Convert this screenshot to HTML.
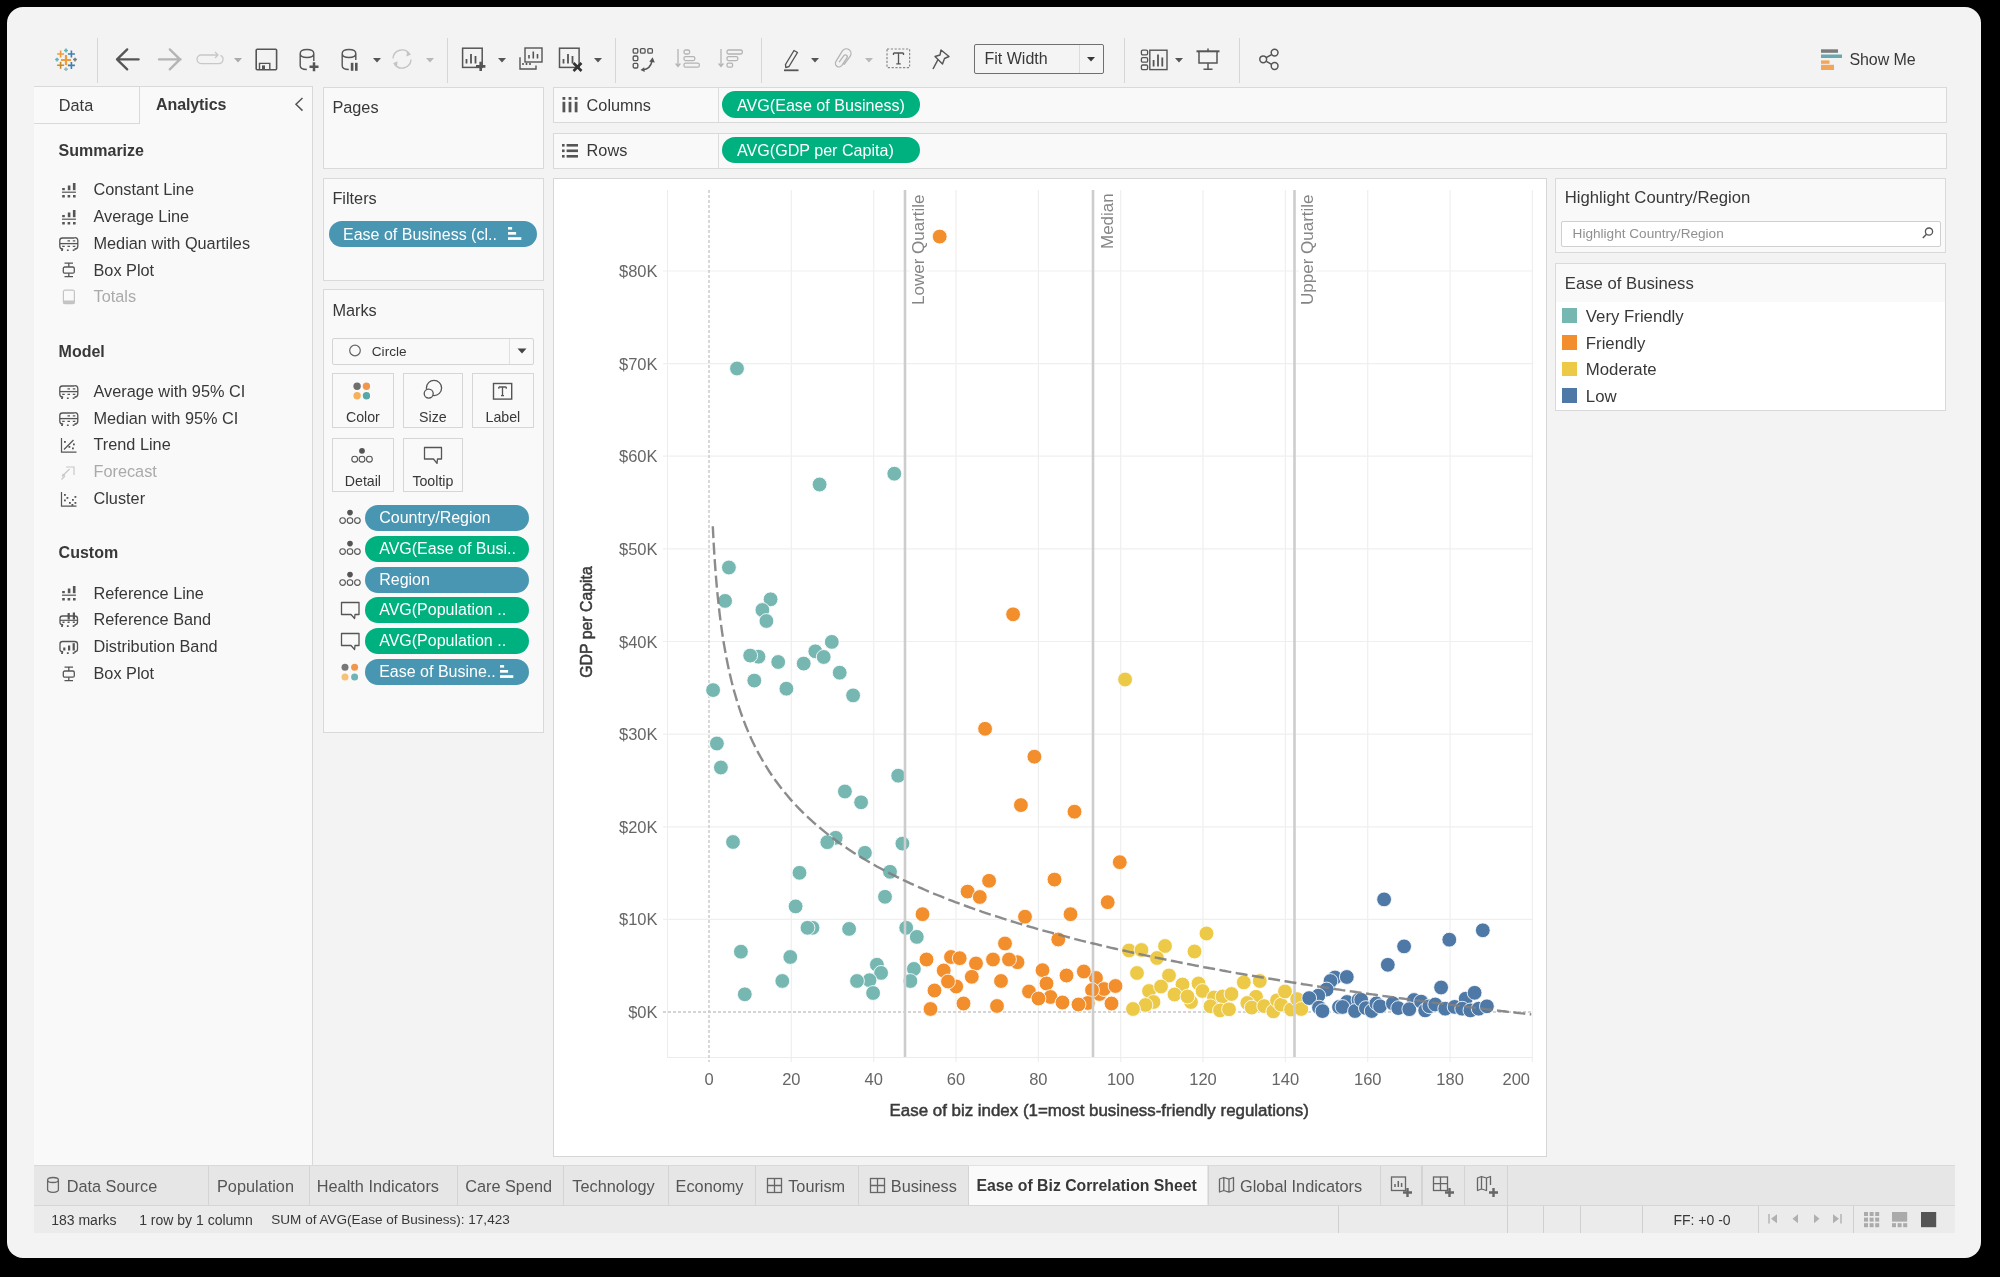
<!DOCTYPE html>
<html><head><meta charset="utf-8"><title>Tableau</title>
<style>
html,body{margin:0;padding:0;-webkit-font-smoothing:antialiased;}
body{width:2000px;height:1277px;background:#000;position:relative;overflow:hidden;font-family:"Liberation Sans", sans-serif;}
div,svg{font-family:"Liberation Sans", sans-serif;}
</style></head><body>
<div style="position:absolute;left:0;top:0;width:2000px;height:1277px;will-change:transform">
<div style="position:absolute;left:7px;top:7px;width:1974px;height:1251px;background:#f3f3f3;border-radius:16px"></div>
<svg style="position:absolute;left:51px;top:44.6px;" width="30" height="30" viewBox="0 0 30 30"><path d="M10 15H20M15 10V20" stroke="#f39a38" stroke-width="2.2"/><path d="M6.1 9H13.1M9.6 5.5V12.5" stroke="#f39a38" stroke-width="1.6"/><path d="M16.9 9H23.9M20.4 5.5V12.5" stroke="#3f7fb2" stroke-width="1.6"/><path d="M6.1 20.2H13.1M9.6 16.7V23.7" stroke="#c98a2a" stroke-width="1.6"/><path d="M16.9 20.4H23.9M20.4 16.9V23.9" stroke="#3f7fb2" stroke-width="1.6"/><path d="M13.1 5.5H16.9M15 3.6V7.4" stroke="#5fb0b8" stroke-width="1.5"/><path d="M13.1 24.2H16.9M15 22.3V26.099999999999998" stroke="#8fb7bd" stroke-width="1.5"/><path d="M4.1 14.6H7.9M6 12.7V16.5" stroke="#5fb0b8" stroke-width="1.5"/><path d="M22.1 14.6H25.9M24 12.7V16.5" stroke="#777" stroke-width="1.5"/></svg>
<div style="position:absolute;left:97px;top:38px;width:1px;height:45px;background:#d6d6d6"></div>
<svg style="position:absolute;left:113px;top:46px;" width="28" height="27" viewBox="0 0 28 27"><path d="M4 13.4H25.6M14.2 3.4L4 13.4L14.2 23.4" stroke="#555" stroke-width="2.3" fill="none" stroke-linecap="round" stroke-linejoin="round"/></svg>
<svg style="position:absolute;left:156px;top:46px;" width="28" height="27" viewBox="0 0 28 27"><path d="M3 13.4H24.6M13.8 3.4L24 13.4L13.8 23.4" stroke="#b4b4b4" stroke-width="2.3" fill="none" stroke-linecap="round" stroke-linejoin="round"/></svg>
<svg style="position:absolute;left:195px;top:50px;" width="31" height="16" viewBox="0 0 31 16"><path d="M22 5H6.3A4.3 4.3 0 0 0 6.3 13.6H23.5A4.3 4.3 0 0 0 25.5 5.4M20 2L23 5L20 8" stroke="#c8c8c8" stroke-width="1.3" fill="none"/></svg>
<svg style="position:absolute;left:233.5px;top:58.4px;" width="8" height="5" viewBox="0 0 8 5"><path d="M0 0 L8 0 L4 4.5 Z" fill="#aaa"/></svg>
<svg style="position:absolute;left:255px;top:48px;" width="23" height="23" viewBox="0 0 23 23"><rect x="1.2" y="1.2" width="20.4" height="20.6" rx="1" stroke="#555" stroke-width="1.6" fill="none"/><path d="M4.5 21.8V15.4H14.8V21.8" stroke="#555" stroke-width="1.4" fill="none"/><rect x="7" y="17.4" width="3" height="4" fill="#555"/></svg>
<svg style="position:absolute;left:297px;top:47px;" width="24" height="26" viewBox="0 0 24 26"><path d="M3.2 6.5V18.8C3.2 21 6 22.5 9.8 22.5M3.2 6.5C3.2 4 6 2.5 10 2.5S16.8 4 16.8 6.5 14 10.5 10 10.5 3.2 9 3.2 6.5ZM16.8 6.5V14" stroke="#555" stroke-width="1.4" fill="none"/><path d="M12.5 19.8H21.5M17 15.3V24.3" stroke="#555" stroke-width="2.5"/></svg>
<svg style="position:absolute;left:339px;top:47px;" width="22" height="26" viewBox="0 0 22 26"><path d="M3.2 6.5V18.8C3.2 21 6 22.5 9.8 22.5M3.2 6.5C3.2 4 6 2.5 10 2.5S16.8 4 16.8 6.5 14 10.5 10 10.5 3.2 9 3.2 6.5ZM16.8 6.5V13" stroke="#555" stroke-width="1.4" fill="none"/><rect x="11.8" y="15.8" width="2.6" height="8" fill="#555"/><rect x="16" y="15.8" width="2.6" height="8" fill="#555"/></svg>
<svg style="position:absolute;left:372.5px;top:58px;" width="8" height="5" viewBox="0 0 8 5"><path d="M0 0 L8 0 L4 4.5 Z" fill="#555"/></svg>
<svg style="position:absolute;left:390px;top:47px;" width="24" height="24" viewBox="0 0 24 24"><path d="M3 11.5A9 9 0 0 1 19.5 7M21 12.5A9 9 0 0 1 4.5 17" stroke="#c4c4c4" stroke-width="1.4" fill="none"/><path d="M17 4L21 7.5L16.5 9.5Z M7 19.8L3 16.3L7.5 14.3Z" fill="#c4c4c4"/></svg>
<svg style="position:absolute;left:426px;top:58px;" width="8" height="5" viewBox="0 0 8 5"><path d="M0 0 L8 0 L4 4.5 Z" fill="#b8b8b8"/></svg>
<div style="position:absolute;left:446.5px;top:38px;width:1.0px;height:45px;background:#d6d6d6"></div>
<svg style="position:absolute;left:460px;top:46px;" width="28" height="26" viewBox="0 0 28 26"><rect x="2.6" y="2.2" width="19.6" height="19.2" stroke="#555" stroke-width="1.5" fill="none"/><path d="M6.5 17.5V13M11 17.5V8M15.5 17.5V10" stroke="#555" stroke-width="1.8"/><path d="M16 20.4H25.4M20.7 15.7V25.1" stroke="#555" stroke-width="2.6"/></svg>
<svg style="position:absolute;left:498px;top:58px;" width="8" height="5" viewBox="0 0 8 5"><path d="M0 0 L8 0 L4 4.5 Z" fill="#555"/></svg>
<svg style="position:absolute;left:517px;top:46px;" width="27" height="26" viewBox="0 0 27 26"><path d="M3 11.2V23H19V19.6" stroke="#555" stroke-width="1.4" fill="none"/><rect x="8" y="2" width="17" height="14" stroke="#555" stroke-width="1.4" fill="none"/><path d="M12 12.5V9M16.3 12.5V5.5M20.5 12.5V8M6 19V17M9.5 19V17M13 19V17" stroke="#555" stroke-width="1.6"/></svg>
<svg style="position:absolute;left:557px;top:46px;" width="28" height="27" viewBox="0 0 28 27"><rect x="2.5" y="2.2" width="19.6" height="19.2" stroke="#555" stroke-width="1.5" fill="none"/><path d="M6.5 17.5V13M11 17.5V8M15.5 17.5V10" stroke="#555" stroke-width="1.8"/><path d="M16.5 17L24.5 25M24.5 17L16.5 25" stroke="#333" stroke-width="2.6"/></svg>
<svg style="position:absolute;left:593.5px;top:58px;" width="8" height="5" viewBox="0 0 8 5"><path d="M0 0 L8 0 L4 4.5 Z" fill="#555"/></svg>
<div style="position:absolute;left:615px;top:38px;width:1px;height:45px;background:#d6d6d6"></div>
<svg style="position:absolute;left:632px;top:47px;" width="24" height="25" viewBox="0 0 24 25"><rect x="1.2" y="1.6" width="4.6" height="4.6" rx="1.2" stroke="#555" stroke-width="1.3" fill="none"/><rect x="8.5" y="1.6" width="4.6" height="4.6" rx="1.2" stroke="#555" stroke-width="1.3" fill="none"/><rect x="15.8" y="1.6" width="4.6" height="4.6" rx="1.2" stroke="#555" stroke-width="1.3" fill="none"/><rect x="1.2" y="9" width="4.6" height="4.6" rx="1.2" stroke="#555" stroke-width="1.3" fill="none"/><rect x="1.2" y="16.4" width="4.6" height="4.6" rx="1.2" stroke="#555" stroke-width="1.3" fill="none"/><path d="M11 22.8C15.5 22.5 19 19 20.2 13.5" stroke="#555" stroke-width="1.5" fill="none"/><path d="M17.3 14.8L20.6 10.3L22.8 15.5ZM12.2 20.2L8.5 23L12.7 25Z" fill="#555"/></svg>
<svg style="position:absolute;left:674px;top:47px;" width="27" height="23" viewBox="0 0 27 23"><path d="M4 2V19M1.6 16.5L4 19.5L6.4 16.5" stroke="#b4b4b4" stroke-width="1.3" fill="none"/><rect x="10" y="3" width="5.6" height="4" rx="1.5" stroke="#b4b4b4" stroke-width="1.3" fill="none"/><rect x="10" y="9.6" width="10.8" height="4" rx="1.5" stroke="#b4b4b4" stroke-width="1.3" fill="none"/><rect x="10" y="16.2" width="15.3" height="4" rx="1.5" stroke="#b4b4b4" stroke-width="1.3" fill="none"/></svg>
<svg style="position:absolute;left:717px;top:47px;" width="27" height="23" viewBox="0 0 27 23"><path d="M4 2V19M1.6 16.5L4 19.5L6.4 16.5" stroke="#b4b4b4" stroke-width="1.3" fill="none"/><rect x="10" y="3" width="15.3" height="4" rx="1.5" stroke="#b4b4b4" stroke-width="1.3" fill="none"/><rect x="10" y="9.6" width="10.8" height="4" rx="1.5" stroke="#b4b4b4" stroke-width="1.3" fill="none"/><rect x="10" y="16.2" width="5.6" height="4" rx="1.5" stroke="#b4b4b4" stroke-width="1.3" fill="none"/></svg>
<div style="position:absolute;left:761px;top:38px;width:1px;height:45px;background:#d6d6d6"></div>
<svg style="position:absolute;left:781px;top:47px;" width="20" height="26" viewBox="0 0 20 26"><path d="M13 3.5L16.5 5.5L8 19.5L4.8 20.6L4.5 17.5Z" stroke="#555" stroke-width="1.4" fill="none" stroke-linejoin="round"/><path d="M3 23.3H17.5" stroke="#555" stroke-width="1.8"/></svg>
<svg style="position:absolute;left:811px;top:58px;" width="8" height="5" viewBox="0 0 8 5"><path d="M0 0 L8 0 L4 4.5 Z" fill="#555"/></svg>
<svg style="position:absolute;left:833px;top:46px;" width="21" height="25" viewBox="0 0 21 25"><path d="M11.2 18.3L17.06 10.37A4.7 4.7 0 0 0 9.54 4.73L3.12 15.14A3.6 3.6 0 0 0 8.88 19.46L13.87 11.99A1.9 1.9 0 0 0 10.83 9.71L6.3 15.8" stroke="#b4b4b4" stroke-width="1.3" fill="none" stroke-linecap="round"/></svg>
<svg style="position:absolute;left:864.5px;top:58px;" width="8" height="5" viewBox="0 0 8 5"><path d="M0 0 L8 0 L4 4.5 Z" fill="#b8b8b8"/></svg>
<svg style="position:absolute;left:885px;top:47px;" width="27" height="23" viewBox="0 0 27 23"><rect x="2" y="2" width="22.6" height="18.6" stroke="#888" stroke-width="1.2" fill="none" stroke-dasharray="2.2 1.6"/><path d="M8.5 6H18.5M13.5 6V16.8M11.3 16.8H15.7M8.5 6V8M18.5 6V8" stroke="#555" stroke-width="1.3" fill="none"/></svg>
<svg style="position:absolute;left:930px;top:47px;" width="22" height="25" viewBox="0 0 22 25"><path d="M11 3L19 9.5L14.5 11.5L12.5 17L10.5 15L5 9.5L10 8Z" stroke="#555" stroke-width="1.4" fill="none" stroke-linejoin="round"/><path d="M8 12.5L3 22" stroke="#555" stroke-width="1.5"/></svg>
<div style="position:absolute;left:973.5px;top:44px;width:130.0px;height:29.5px;border:1.4px solid #6f6f6f;border-radius:2px;box-sizing:border-box;background:#f4f4f4"></div>
<div style="position:absolute;left:1079px;top:45px;width:1px;height:27.5px;background:#dcdcdc"></div>
<div style="position:absolute;left:984.50px;top:51.06px;font-size:16px;line-height:16px;font-weight:400;color:#383838;white-space:nowrap;">Fit Width</div>
<svg style="position:absolute;left:1086.7px;top:56.8px;" width="8" height="5" viewBox="0 0 8 5"><path d="M0 0 L8 0 L4 4.5 Z" fill="#383838"/></svg>
<div style="position:absolute;left:1124px;top:38px;width:1px;height:45px;background:#d6d6d6"></div>
<svg style="position:absolute;left:1140px;top:49px;" width="29" height="22" viewBox="0 0 29 22"><rect x="1.4" y="1.2" width="6.2" height="4.6" rx="1.3" stroke="#555" stroke-width="1.3" fill="none"/><rect x="1.4" y="8.6" width="6.2" height="4.6" rx="1.3" stroke="#555" stroke-width="1.3" fill="none"/><rect x="1.4" y="16" width="6.2" height="4.6" rx="1.3" stroke="#555" stroke-width="1.3" fill="none"/><rect x="9.8" y="1.2" width="17.2" height="19.4" stroke="#555" stroke-width="1.4" fill="none"/><path d="M13.6 17.5V11M18 17.5V5.5M22.3 17.5V8.5" stroke="#555" stroke-width="1.8"/></svg>
<svg style="position:absolute;left:1174.5px;top:58px;" width="8" height="5" viewBox="0 0 8 5"><path d="M0 0 L8 0 L4 4.5 Z" fill="#555"/></svg>
<svg style="position:absolute;left:1195px;top:48px;" width="26" height="23" viewBox="0 0 26 23"><path d="M1.5 3.3H24.5" stroke="#555" stroke-width="2"/><path d="M4 3.5V15H22V3.5M13 15V21M8.5 21.2H17.5M13 0.5V3" stroke="#555" stroke-width="1.5" fill="none"/></svg>
<div style="position:absolute;left:1239px;top:38px;width:1px;height:45px;background:#d6d6d6"></div>
<svg style="position:absolute;left:1257px;top:47px;" width="24" height="25" viewBox="0 0 24 25"><path d="M6 12.3L17.5 6M6 12.3L17.5 19" stroke="#555" stroke-width="1.5"/><circle cx="17.6" cy="5.6" r="3.4" stroke="#555" stroke-width="1.5" fill="#f4f4f4"/><circle cx="6.2" cy="12.3" r="3.4" stroke="#555" stroke-width="1.5" fill="#f4f4f4"/><circle cx="17.6" cy="19" r="3.4" stroke="#555" stroke-width="1.5" fill="#f4f4f4"/></svg>
<svg style="position:absolute;left:1820px;top:48px;" width="25" height="23" viewBox="0 0 25 23"><rect x="1" y="1.3" width="17" height="3.5" fill="#7c7c7c"/><rect x="1" y="6.5" width="21" height="3.5" fill="#66aab0"/><rect x="1" y="12.4" width="8.5" height="3.4" fill="#f2a65a"/><rect x="1" y="16.8" width="13" height="5.2" fill="#f2a65a"/></svg>
<div style="position:absolute;left:1849.50px;top:52.46px;font-size:16px;line-height:16px;font-weight:400;color:#383838;white-space:nowrap;letter-spacing:-0.1px">Show Me</div>
<div style="position:absolute;left:34px;top:86px;width:279px;height:1079px;background:#f9f9f9;border-top:1px solid #d9d9d9;border-right:1px solid #d9d9d9;box-sizing:border-box"></div>
<div style="position:absolute;left:34px;top:86px;width:106px;height:38px;border-right:1px solid #d9d9d9;border-bottom:1px solid #d9d9d9;box-sizing:border-box;background:#f9f9f9;border-top:1px solid #d9d9d9"></div>
<div style="position:absolute;left:58.80px;top:97.00px;font-size:16.3px;line-height:16.3px;font-weight:400;color:#383838;white-space:nowrap;">Data</div>
<div style="position:absolute;left:156.00px;top:96.66px;font-size:16px;line-height:16px;font-weight:700;color:#383838;white-space:nowrap;letter-spacing:-0.1px">Analytics</div>
<svg style="position:absolute;left:292px;top:96px;" width="14" height="16" viewBox="0 0 14 16"><path d="M10.5 2L4 8.3L10.5 14.6" stroke="#555" stroke-width="1.5" fill="none"/></svg>
<div style="position:absolute;left:58.60px;top:142.66px;font-size:16px;line-height:16px;font-weight:700;color:#383838;white-space:nowrap;">Summarize</div>
<div style="position:absolute;left:58.60px;top:343.76px;font-size:16px;line-height:16px;font-weight:700;color:#383838;white-space:nowrap;">Model</div>
<div style="position:absolute;left:58.60px;top:544.66px;font-size:16px;line-height:16px;font-weight:700;color:#383838;white-space:nowrap;">Custom</div>
<svg style="position:absolute;left:59px;top:182.2px;" width="20" height="16" viewBox="0 0 20 16"><rect x="3.2" y="6" width="2.6" height="2.2" fill="#555"/><rect x="8.8" y="3.5" width="2.6" height="4.7" fill="#555"/><rect x="13.9" y="1" width="2.6" height="7.2" fill="#555"/><path d="M3 10.2H17" stroke="#555" stroke-width="1.2"/><rect x="3.2" y="13" width="2.6" height="2.5" fill="#555"/><rect x="8.6" y="13" width="2.6" height="2.5" fill="#555"/><rect x="14" y="13" width="2.6" height="2.5" fill="#555"/></svg>
<div style="position:absolute;left:93.50px;top:181.40px;font-size:16.3px;line-height:16.3px;font-weight:400;color:#383838;white-space:nowrap;">Constant Line</div>
<svg style="position:absolute;left:59px;top:208.9px;" width="20" height="16" viewBox="0 0 20 16"><rect x="3.2" y="6" width="2.6" height="2.2" fill="#555"/><rect x="8.8" y="3.5" width="2.6" height="4.7" fill="#555"/><rect x="13.9" y="1" width="2.6" height="7.2" fill="#555"/><path d="M3 10.2H17" stroke="#555" stroke-width="1.2"/><rect x="3.2" y="13" width="2.6" height="2.5" fill="#555"/><rect x="8.6" y="13" width="2.6" height="2.5" fill="#555"/><rect x="14" y="13" width="2.6" height="2.5" fill="#555"/></svg>
<div style="position:absolute;left:93.50px;top:208.10px;font-size:16.3px;line-height:16.3px;font-weight:400;color:#383838;white-space:nowrap;">Average Line</div>
<svg style="position:absolute;left:59px;top:235.6px;" width="20" height="16" viewBox="0 0 20 16"><path d="M3.5 14V13C1.2 13 0.8 12 0.8 10V4.5C0.8 2.5 1.5 2 3.5 2H15C17 1 18.8 2.5 18.8 4.5V10C18.8 12 18 13 16 13V14" stroke="#555" stroke-width="1.3" fill="none"/><path d="M1 7.6H19" stroke="#555" stroke-width="1.3"/><path d="M8.5 4.8H11M13.8 4.8H16.3M3.2 10.4H5.7M8.5 10.4H11M13.8 10.4H16.3" stroke="#555" stroke-width="1.3"/><path d="M3 13.5V15M8.8 13.5V15M14.6 13.5V15" stroke="#555" stroke-width="1.8"/></svg>
<div style="position:absolute;left:93.50px;top:234.80px;font-size:16.3px;line-height:16.3px;font-weight:400;color:#383838;white-space:nowrap;">Median with Quartiles</div>
<svg style="position:absolute;left:59px;top:262.4px;" width="20" height="16" viewBox="0 0 20 16"><path d="M5.5 1.2H14M9.8 1.2V5M9.8 11.2V14.6M5.5 14.6H14" stroke="#555" stroke-width="1.3"/><rect x="4.3" y="5" width="11" height="6.2" rx="1.5" stroke="#555" stroke-width="1.3" fill="none"/></svg>
<div style="position:absolute;left:93.50px;top:261.60px;font-size:16.3px;line-height:16.3px;font-weight:400;color:#383838;white-space:nowrap;">Box Plot</div>
<svg style="position:absolute;left:59px;top:289.0px;" width="20" height="16" viewBox="0 0 20 16"><rect x="4.4" y="1.2" width="11" height="13.5" rx="1.6" stroke="#c4c4c4" stroke-width="1.2" fill="none"/><rect x="4.4" y="11.5" width="11" height="3.2" fill="#c4c4c4"/></svg>
<div style="position:absolute;left:93.50px;top:288.20px;font-size:16.3px;line-height:16.3px;font-weight:400;color:#aaa;white-space:nowrap;">Totals</div>
<svg style="position:absolute;left:59px;top:383.8px;" width="20" height="16" viewBox="0 0 20 16"><path d="M3.5 14V13C1.2 13 0.8 12 0.8 10V4.5C0.8 2.5 1.5 2 3.5 2H15C17 1 18.8 2.5 18.8 4.5V10C18.8 12 18 13 16 13V14" stroke="#555" stroke-width="1.3" fill="none"/><path d="M1 7.6H19" stroke="#555" stroke-width="1.3"/><path d="M8.5 4.8H11M13.8 4.8H16.3M3.2 10.4H5.7M8.5 10.4H11M13.8 10.4H16.3" stroke="#555" stroke-width="1.3"/><path d="M3 13.5V15M8.8 13.5V15M14.6 13.5V15" stroke="#555" stroke-width="1.8"/></svg>
<div style="position:absolute;left:93.50px;top:383.00px;font-size:16.3px;line-height:16.3px;font-weight:400;color:#383838;white-space:nowrap;">Average with 95% CI</div>
<svg style="position:absolute;left:59px;top:410.5px;" width="20" height="16" viewBox="0 0 20 16"><path d="M3.5 14V13C1.2 13 0.8 12 0.8 10V4.5C0.8 2.5 1.5 2 3.5 2H15C17 1 18.8 2.5 18.8 4.5V10C18.8 12 18 13 16 13V14" stroke="#555" stroke-width="1.3" fill="none"/><path d="M1 7.6H19" stroke="#555" stroke-width="1.3"/><path d="M8.5 4.8H11M13.8 4.8H16.3M3.2 10.4H5.7M8.5 10.4H11M13.8 10.4H16.3" stroke="#555" stroke-width="1.3"/><path d="M3 13.5V15M8.8 13.5V15M14.6 13.5V15" stroke="#555" stroke-width="1.8"/></svg>
<div style="position:absolute;left:93.50px;top:409.70px;font-size:16.3px;line-height:16.3px;font-weight:400;color:#383838;white-space:nowrap;">Median with 95% CI</div>
<svg style="position:absolute;left:59px;top:437.2px;" width="20" height="16" viewBox="0 0 20 16"><path d="M2.5 1V15.2H17.5" stroke="#555" stroke-width="1.2" fill="none"/><path d="M5 12.5L14.5 3" stroke="#555" stroke-width="1.2"/><rect x="5" y="4" width="1.8" height="1.8" fill="#555"/><rect x="9.5" y="9" width="1.8" height="1.8" fill="#555"/><rect x="13" y="10.5" width="1.8" height="1.8" fill="#555"/><rect x="14" y="6.5" width="1.8" height="1.8" fill="#555"/></svg>
<div style="position:absolute;left:93.50px;top:436.40px;font-size:16.3px;line-height:16.3px;font-weight:400;color:#383838;white-space:nowrap;">Trend Line</div>
<svg style="position:absolute;left:59px;top:463.9px;" width="20" height="16" viewBox="0 0 20 16"><path d="M3 12.5L10.5 5M7 3H15V11M2.5 15.5L5.5 12.5" stroke="#c8c8c8" stroke-width="1.2" fill="none"/><path d="M3.5 10L6 12.5" stroke="#c8c8c8" stroke-width="1.2"/></svg>
<div style="position:absolute;left:93.50px;top:463.10px;font-size:16.3px;line-height:16.3px;font-weight:400;color:#aaa;white-space:nowrap;">Forecast</div>
<svg style="position:absolute;left:59px;top:490.6px;" width="20" height="16" viewBox="0 0 20 16"><path d="M2.5 1V15.2H17.5" stroke="#555" stroke-width="1.2" fill="none"/><rect x="5" y="3" width="1.8" height="1.8" fill="#555"/><rect x="7.5" y="6" width="1.8" height="1.8" fill="#555"/><rect x="5" y="8.5" width="1.8" height="1.8" fill="#555"/><rect x="10" y="11" width="1.8" height="1.8" fill="#555"/><rect x="13" y="8" width="1.8" height="1.8" fill="#555"/><rect x="15.5" y="5" width="1.8" height="1.8" fill="#555"/><rect x="15.5" y="11" width="1.8" height="1.8" fill="#555"/><rect x="12.5" y="13" width="1.8" height="1.8" fill="#555"/></svg>
<div style="position:absolute;left:93.50px;top:489.80px;font-size:16.3px;line-height:16.3px;font-weight:400;color:#383838;white-space:nowrap;">Cluster</div>
<svg style="position:absolute;left:59px;top:585.3px;" width="20" height="16" viewBox="0 0 20 16"><rect x="3.2" y="6" width="2.6" height="2.2" fill="#555"/><rect x="8.8" y="3.5" width="2.6" height="4.7" fill="#555"/><rect x="13.9" y="1" width="2.6" height="7.2" fill="#555"/><path d="M3 10.2H17" stroke="#555" stroke-width="1.2"/><rect x="3.2" y="13" width="2.6" height="2.5" fill="#555"/><rect x="8.6" y="13" width="2.6" height="2.5" fill="#555"/><rect x="14" y="13" width="2.6" height="2.5" fill="#555"/></svg>
<div style="position:absolute;left:93.50px;top:584.50px;font-size:16.3px;line-height:16.3px;font-weight:400;color:#383838;white-space:nowrap;">Reference Line</div>
<svg style="position:absolute;left:59px;top:612.0px;" width="20" height="16" viewBox="0 0 20 16"><path d="M3.5 14V12.6C1.5 12.6 1 12 1 10V6.5C1 4.8 1.6 4 3.5 4H15.5C17.5 4 18.5 4.8 18.5 6.5V10C18.5 12 18 12.6 16 12.6V14" stroke="#555" stroke-width="1.3" fill="none"/><rect x="8.6" y="1" width="2.2" height="6.5" fill="#555"/><rect x="13.8" y="0.5" width="2.2" height="7" fill="#555"/><path d="M1 8.3H19" stroke="#555" stroke-width="1.2"/><path d="M3.5 10.3H5.5M8.6 10.3H10.6M13.8 10.3H15.8" stroke="#555" stroke-width="1.6"/><path d="M3 13.3V15M8.8 13.3V15M14.6 13.3V15" stroke="#555" stroke-width="1.8"/></svg>
<div style="position:absolute;left:93.50px;top:611.20px;font-size:16.3px;line-height:16.3px;font-weight:400;color:#383838;white-space:nowrap;">Reference Band</div>
<svg style="position:absolute;left:59px;top:638.8px;" width="20" height="16" viewBox="0 0 20 16"><path d="M3.5 14V12.6C1.5 12.6 1 12 1 10V5C1 3 1.6 2.5 3.5 2.5H15.5C17.5 2.5 18.5 3 18.5 5V10C18.5 12 18 12.6 16 12.6V14" stroke="#555" stroke-width="1.3" fill="none"/><rect x="4.2" y="8.5" width="2.2" height="3" fill="#555"/><rect x="9" y="6.5" width="2.2" height="5" fill="#555"/><rect x="13.6" y="4.2" width="2.2" height="7.3" fill="#555"/><path d="M3 13.3V15M8.8 13.3V15M14.6 13.3V15" stroke="#555" stroke-width="1.8"/></svg>
<div style="position:absolute;left:93.50px;top:638.00px;font-size:16.3px;line-height:16.3px;font-weight:400;color:#383838;white-space:nowrap;">Distribution Band</div>
<svg style="position:absolute;left:59px;top:665.6px;" width="20" height="16" viewBox="0 0 20 16"><path d="M5.5 1.2H14M9.8 1.2V5M9.8 11.2V14.6M5.5 14.6H14" stroke="#555" stroke-width="1.3"/><rect x="4.3" y="5" width="11" height="6.2" rx="1.5" stroke="#555" stroke-width="1.3" fill="none"/></svg>
<div style="position:absolute;left:93.50px;top:664.80px;font-size:16.3px;line-height:16.3px;font-weight:400;color:#383838;white-space:nowrap;">Box Plot</div>
<div style="position:absolute;left:322.5px;top:86.5px;width:221.0px;height:82.0px;background:#f9f9f9;border:1px solid #d9d9d9;box-sizing:border-box"></div>
<div style="position:absolute;left:332.40px;top:98.70px;font-size:16.3px;line-height:16.3px;font-weight:400;color:#383838;white-space:nowrap;">Pages</div>
<div style="position:absolute;left:322.5px;top:177.5px;width:221.0px;height:103.5px;background:#f9f9f9;border:1px solid #d9d9d9;box-sizing:border-box"></div>
<div style="position:absolute;left:332.40px;top:189.60px;font-size:16.3px;line-height:16.3px;font-weight:400;color:#383838;white-space:nowrap;">Filters</div>
<div style="position:absolute;left:328.8px;top:220.8px;width:208.2px;height:26.399999999999977px;background:#4996b2;border-radius:13.199999999999989px"></div>
<div style="position:absolute;left:343.00px;top:226.66px;font-size:16px;line-height:16px;font-weight:400;color:#fff;white-space:nowrap;">Ease of Business (cl..</div>
<svg style="position:absolute;left:507.7px;top:226.8px;" width="16" height="14" viewBox="0 0 16 14"><rect x="0" y="0" width="4.1" height="2.6" fill="#fff"/><rect x="0" y="5" width="8.1" height="2.7" fill="#fff"/><rect x="0" y="10.2" width="13.3" height="2.7" fill="#fff"/></svg>
<div style="position:absolute;left:322.5px;top:289px;width:221.0px;height:443.5px;background:#f9f9f9;border:1px solid #d9d9d9;box-sizing:border-box"></div>
<div style="position:absolute;left:332.40px;top:302.20px;font-size:16.3px;line-height:16.3px;font-weight:400;color:#383838;white-space:nowrap;">Marks</div>
<div style="position:absolute;left:332px;top:337.6px;width:201.70000000000005px;height:27.0px;border:1px solid #d4d4d4;border-radius:2px;box-sizing:border-box;background:#f9f9f9"></div>
<div style="position:absolute;left:509px;top:338.6px;width:1px;height:25.0px;background:#e0e0e0"></div>
<svg style="position:absolute;left:348px;top:344px;" width="14" height="14" viewBox="0 0 14 14"><circle cx="7" cy="6.5" r="5.3" stroke="#666" stroke-width="1.2" fill="none"/></svg>
<div style="position:absolute;left:371.80px;top:344.69px;font-size:13.6px;line-height:13.6px;font-weight:400;color:#383838;white-space:nowrap;">Circle</div>
<svg style="position:absolute;left:516.5px;top:348px;" width="10" height="6" viewBox="0 0 10 6"><path d="M0.5 0.5H9.5L5 5.5Z" fill="#444"/></svg>
<div style="position:absolute;left:332px;top:373.4px;width:61.80000000000001px;height:55.0px;background:#f9f9f9;border:1px solid #d6d6d6;box-sizing:border-box"></div>
<div style="position:absolute;left:402.5px;top:373.4px;width:60.80000000000001px;height:55.0px;background:#f9f9f9;border:1px solid #d6d6d6;box-sizing:border-box"></div>
<div style="position:absolute;left:472.2px;top:373.4px;width:61.50000000000006px;height:55.0px;background:#f9f9f9;border:1px solid #d6d6d6;box-sizing:border-box"></div>
<div style="position:absolute;left:332px;top:437.5px;width:61.80000000000001px;height:54.89999999999998px;background:#f9f9f9;border:1px solid #d6d6d6;box-sizing:border-box"></div>
<div style="position:absolute;left:402.5px;top:437.5px;width:60.80000000000001px;height:54.89999999999998px;background:#f9f9f9;border:1px solid #d6d6d6;box-sizing:border-box"></div>
<div style="position:absolute;left:62.90px;width:600px;text-align:center;top:409.98px;font-size:14.2px;line-height:14.2px;font-weight:400;color:#383838;white-space:nowrap;">Color</div>
<div style="position:absolute;left:132.90px;width:600px;text-align:center;top:409.98px;font-size:14.2px;line-height:14.2px;font-weight:400;color:#383838;white-space:nowrap;">Size</div>
<div style="position:absolute;left:202.90px;width:600px;text-align:center;top:409.98px;font-size:14.2px;line-height:14.2px;font-weight:400;color:#383838;white-space:nowrap;">Label</div>
<div style="position:absolute;left:62.90px;width:600px;text-align:center;top:473.98px;font-size:14.2px;line-height:14.2px;font-weight:400;color:#383838;white-space:nowrap;">Detail</div>
<div style="position:absolute;left:132.90px;width:600px;text-align:center;top:473.98px;font-size:14.2px;line-height:14.2px;font-weight:400;color:#383838;white-space:nowrap;">Tooltip</div>
<svg style="position:absolute;left:350px;top:379px;" width="20" height="22" viewBox="0 0 20 22"><circle cx="7.1" cy="7.3" r="3.7" fill="#6f6f6f"/><circle cx="16.5" cy="7.3" r="3.7" fill="#f3954a"/><circle cx="7.1" cy="16.7" r="3.7" fill="#f6b15b"/><circle cx="16.5" cy="16.7" r="3.7" fill="#5aa6a6"/></svg>
<svg style="position:absolute;left:420px;top:378px;" width="24" height="24" viewBox="0 0 24 24"><circle cx="14" cy="10" r="7.6" stroke="#555" stroke-width="1.3" fill="none"/><circle cx="8.7" cy="15.6" r="4.5" stroke="#555" stroke-width="1.3" fill="#f9f9f9"/></svg>
<svg style="position:absolute;left:492px;top:382px;" width="22" height="19" viewBox="0 0 22 19"><rect x="1.5" y="1.5" width="18.2" height="15.6" stroke="#555" stroke-width="1.4" fill="none"/><path d="M6.8 5H14.3M10.5 5V13.6M9 13.6H12M6.8 5V6.8M14.3 5V6.8" stroke="#555" stroke-width="1.3" fill="none"/></svg>
<svg style="position:absolute;left:350px;top:446px;" width="24" height="18" viewBox="0 0 24 18"><circle cx="12" cy="4.8" r="2.9" fill="#555"/><circle cx="4.7" cy="13.2" r="2.9" stroke="#555" stroke-width="1.1" fill="none"/><circle cx="12" cy="13.2" r="2.9" stroke="#555" stroke-width="1.1" fill="none"/><circle cx="19.4" cy="13.2" r="2.9" stroke="#555" stroke-width="1.1" fill="none"/></svg>
<svg style="position:absolute;left:422px;top:445px;" width="22" height="21" viewBox="0 0 22 21"><path d="M2.5 2.5H19.5V14H15.5L15 18.3L11.5 14H2.5Z" stroke="#555" stroke-width="1.3" fill="none" stroke-linejoin="round"/></svg>
<div style="position:absolute;left:365.4px;top:505.3px;width:163.39999999999998px;height:26.19999999999999px;background:#4996b2;border-radius:13.099999999999994px"></div>
<div style="position:absolute;left:379.20px;top:510.36px;font-size:16px;line-height:16px;font-weight:400;color:#fff;white-space:nowrap;">Country/Region</div>
<svg style="position:absolute;left:338px;top:508.29999999999995px;" width="24" height="20" viewBox="0 0 24 20"><circle cx="12" cy="4.6" r="2.8" fill="#555"/><circle cx="4.6" cy="12.6" r="2.8" stroke="#555" stroke-width="1.1" fill="none"/><circle cx="12" cy="12.6" r="2.8" stroke="#555" stroke-width="1.1" fill="none"/><circle cx="19.4" cy="12.6" r="2.8" stroke="#555" stroke-width="1.1" fill="none"/></svg>
<div style="position:absolute;left:365.4px;top:536px;width:163.39999999999998px;height:26.200000000000045px;background:#00b180;border-radius:13.100000000000023px"></div>
<div style="position:absolute;left:379.20px;top:541.06px;font-size:16px;line-height:16px;font-weight:400;color:#fff;white-space:nowrap;">AVG(Ease of Busi..</div>
<svg style="position:absolute;left:338px;top:539px;" width="24" height="20" viewBox="0 0 24 20"><circle cx="12" cy="4.6" r="2.8" fill="#555"/><circle cx="4.6" cy="12.6" r="2.8" stroke="#555" stroke-width="1.1" fill="none"/><circle cx="12" cy="12.6" r="2.8" stroke="#555" stroke-width="1.1" fill="none"/><circle cx="19.4" cy="12.6" r="2.8" stroke="#555" stroke-width="1.1" fill="none"/></svg>
<div style="position:absolute;left:365.4px;top:566.7px;width:163.39999999999998px;height:26.200000000000045px;background:#4996b2;border-radius:13.100000000000023px"></div>
<div style="position:absolute;left:379.20px;top:571.76px;font-size:16px;line-height:16px;font-weight:400;color:#fff;white-space:nowrap;">Region</div>
<svg style="position:absolute;left:338px;top:569.7px;" width="24" height="20" viewBox="0 0 24 20"><circle cx="12" cy="4.6" r="2.8" fill="#555"/><circle cx="4.6" cy="12.6" r="2.8" stroke="#555" stroke-width="1.1" fill="none"/><circle cx="12" cy="12.6" r="2.8" stroke="#555" stroke-width="1.1" fill="none"/><circle cx="19.4" cy="12.6" r="2.8" stroke="#555" stroke-width="1.1" fill="none"/></svg>
<div style="position:absolute;left:365.4px;top:597.3px;width:163.39999999999998px;height:26.200000000000045px;background:#00b180;border-radius:13.100000000000023px"></div>
<div style="position:absolute;left:379.20px;top:602.36px;font-size:16px;line-height:16px;font-weight:400;color:#fff;white-space:nowrap;">AVG(Population ..</div>
<svg style="position:absolute;left:339px;top:600.3px;" width="22" height="20" viewBox="0 0 22 20"><path d="M2.5 2.5H20V14.5H16L15.6 18.5L12 14.5H2.5Z" stroke="#555" stroke-width="1.3" fill="none" stroke-linejoin="round"/></svg>
<div style="position:absolute;left:365.4px;top:628px;width:163.39999999999998px;height:26.200000000000045px;background:#00b180;border-radius:13.100000000000023px"></div>
<div style="position:absolute;left:379.20px;top:633.06px;font-size:16px;line-height:16px;font-weight:400;color:#fff;white-space:nowrap;">AVG(Population ..</div>
<svg style="position:absolute;left:339px;top:631px;" width="22" height="20" viewBox="0 0 22 20"><path d="M2.5 2.5H20V14.5H16L15.6 18.5L12 14.5H2.5Z" stroke="#555" stroke-width="1.3" fill="none" stroke-linejoin="round"/></svg>
<div style="position:absolute;left:365.4px;top:658.6px;width:163.39999999999998px;height:26.200000000000045px;background:#4996b2;border-radius:13.100000000000023px"></div>
<div style="position:absolute;left:379.20px;top:663.66px;font-size:16px;line-height:16px;font-weight:400;color:#fff;white-space:nowrap;">Ease of Busine..</div>
<svg style="position:absolute;left:499.49999999999994px;top:664.6px;" width="16" height="14" viewBox="0 0 16 14"><rect x="0" y="0" width="4.1" height="2.6" fill="#fff"/><rect x="0" y="5" width="8.1" height="2.7" fill="#fff"/><rect x="0" y="10.2" width="13.3" height="2.7" fill="#fff"/></svg>
<svg style="position:absolute;left:340px;top:662.6px;" width="20" height="19" viewBox="0 0 20 19"><circle cx="5" cy="4.3" r="3.5" fill="#777"/><circle cx="14.6" cy="4.3" r="3.5" fill="#f3954a"/><circle cx="5" cy="13.9" r="3.5" fill="#f6c27a"/><circle cx="14.6" cy="13.9" r="3.5" fill="#6fb5b5"/></svg>
<div style="position:absolute;left:552.5px;top:87px;width:1394.0px;height:35.8px;background:#f9f9f9;border:1px solid #d9d9d9;box-sizing:border-box"></div>
<div style="position:absolute;left:718.2px;top:88px;width:1.0px;height:33.8px;background:#dcdcdc"></div>
<div style="position:absolute;left:586.60px;top:96.80px;font-size:16.3px;line-height:16.3px;font-weight:400;color:#383838;white-space:nowrap;">Columns</div>
<svg style="position:absolute;left:560px;top:95px;" width="20" height="20" viewBox="0 0 20 20"><rect x="2.5" y="2" width="2.8" height="2.8" fill="#555"/><rect x="8.6" y="2" width="2.8" height="2.8" fill="#555"/><rect x="14.7" y="2" width="2.8" height="2.8" fill="#555"/><rect x="2.5" y="6.8" width="2.8" height="10.5" fill="#555"/><rect x="8.6" y="6.8" width="2.8" height="10.5" fill="#555"/><rect x="14.7" y="6.8" width="2.8" height="10.5" fill="#555"/></svg>
<div style="position:absolute;left:722.4px;top:91.4px;width:197.20000000000005px;height:26.599999999999994px;background:#00b180;border-radius:13.299999999999997px"></div>
<div style="position:absolute;left:737.00px;top:96.97px;font-size:16.1px;line-height:16.1px;font-weight:400;color:#fff;white-space:nowrap;">AVG(Ease of Business)</div>
<div style="position:absolute;left:552.5px;top:132.5px;width:1394.0px;height:36.0px;background:#f9f9f9;border:1px solid #d9d9d9;box-sizing:border-box"></div>
<div style="position:absolute;left:718.2px;top:133.5px;width:1.0px;height:34.0px;background:#dcdcdc"></div>
<div style="position:absolute;left:586.60px;top:142.30px;font-size:16.3px;line-height:16.3px;font-weight:400;color:#383838;white-space:nowrap;">Rows</div>
<svg style="position:absolute;left:560px;top:140.5px;" width="20" height="20" viewBox="0 0 20 20"><rect x="2" y="3" width="2.6" height="2.6" fill="#555"/><rect x="2" y="8.5" width="2.6" height="2.6" fill="#555"/><rect x="2" y="14" width="2.6" height="2.6" fill="#555"/><rect x="6.6" y="3" width="11.4" height="2.6" fill="#555"/><rect x="6.6" y="8.5" width="11.4" height="2.6" fill="#555"/><rect x="6.6" y="14" width="11.4" height="2.6" fill="#555"/></svg>
<div style="position:absolute;left:722.4px;top:136.9px;width:197.20000000000005px;height:26.599999999999994px;background:#00b180;border-radius:13.299999999999997px"></div>
<div style="position:absolute;left:737.00px;top:142.47px;font-size:16.1px;line-height:16.1px;font-weight:400;color:#fff;white-space:nowrap;">AVG(GDP per Capita)</div>
<div style="position:absolute;left:552.5px;top:177.5px;width:994.0px;height:979.5px;background:#fff;border:1px solid #d6d6d6;box-sizing:border-box"></div>
<svg style="position:absolute;left:0px;top:0px;pointer-events:none" width="2000" height="1277" viewBox="0 0 2000 1277"><path d="M667.5 190V1057" stroke="#ececec" stroke-width="1"/><path d="M791.3 190V1062" stroke="#efefef" stroke-width="1.2"/><path d="M873.7 190V1062" stroke="#efefef" stroke-width="1.2"/><path d="M956.0 190V1062" stroke="#efefef" stroke-width="1.2"/><path d="M1038.4 190V1062" stroke="#efefef" stroke-width="1.2"/><path d="M1120.7 190V1062" stroke="#efefef" stroke-width="1.2"/><path d="M1203.0 190V1062" stroke="#efefef" stroke-width="1.2"/><path d="M1285.4 190V1062" stroke="#efefef" stroke-width="1.2"/><path d="M1367.7 190V1062" stroke="#efefef" stroke-width="1.2"/><path d="M1450.1 190V1062" stroke="#efefef" stroke-width="1.2"/><path d="M1532.4 190V1062" stroke="#efefef" stroke-width="1.2"/><path d="M663 919.4H1532.5" stroke="#efefef" stroke-width="1.2"/><path d="M663 826.8H1532.5" stroke="#efefef" stroke-width="1.2"/><path d="M663 734.1H1532.5" stroke="#efefef" stroke-width="1.2"/><path d="M663 641.5H1532.5" stroke="#efefef" stroke-width="1.2"/><path d="M663 548.9H1532.5" stroke="#efefef" stroke-width="1.2"/><path d="M663 456.2H1532.5" stroke="#efefef" stroke-width="1.2"/><path d="M663 363.6H1532.5" stroke="#efefef" stroke-width="1.2"/><path d="M663 271.0H1532.5" stroke="#efefef" stroke-width="1.2"/><path d="M667 1057.5H1532.5" stroke="#ececec" stroke-width="1"/><path d="M709 190V1062" stroke="#cbcbcb" stroke-width="1.5" stroke-dasharray="3 2"/><path d="M663 1012H1532.5" stroke="#c8c8c8" stroke-width="1.5" stroke-dasharray="3 2"/><circle cx="737" cy="368.5" r="7.4" fill="#76b7b2" stroke="#fff" stroke-width="1" stroke-opacity="0.85"/><circle cx="819.6" cy="484.5" r="7.4" fill="#76b7b2" stroke="#fff" stroke-width="1" stroke-opacity="0.85"/><circle cx="894.3" cy="473.7" r="7.4" fill="#76b7b2" stroke="#fff" stroke-width="1" stroke-opacity="0.85"/><circle cx="728.9" cy="567.5" r="7.4" fill="#76b7b2" stroke="#fff" stroke-width="1" stroke-opacity="0.85"/><circle cx="725.1" cy="600.9" r="7.4" fill="#76b7b2" stroke="#fff" stroke-width="1" stroke-opacity="0.85"/><circle cx="770.6" cy="599.3" r="7.4" fill="#76b7b2" stroke="#fff" stroke-width="1" stroke-opacity="0.85"/><circle cx="762.4" cy="610.0" r="7.4" fill="#76b7b2" stroke="#fff" stroke-width="1" stroke-opacity="0.85"/><circle cx="766.4" cy="621.0" r="7.4" fill="#76b7b2" stroke="#fff" stroke-width="1" stroke-opacity="0.85"/><circle cx="831.8" cy="641.9" r="7.4" fill="#76b7b2" stroke="#fff" stroke-width="1" stroke-opacity="0.85"/><circle cx="815.3" cy="651.3" r="7.4" fill="#76b7b2" stroke="#fff" stroke-width="1" stroke-opacity="0.85"/><circle cx="823.7" cy="657.0" r="7.4" fill="#76b7b2" stroke="#fff" stroke-width="1" stroke-opacity="0.85"/><circle cx="758.5" cy="656.7" r="7.4" fill="#76b7b2" stroke="#fff" stroke-width="1" stroke-opacity="0.85"/><circle cx="750.2" cy="655.6" r="7.4" fill="#76b7b2" stroke="#fff" stroke-width="1" stroke-opacity="0.85"/><circle cx="778.2" cy="662.0" r="7.4" fill="#76b7b2" stroke="#fff" stroke-width="1" stroke-opacity="0.85"/><circle cx="803.7" cy="663.6" r="7.4" fill="#76b7b2" stroke="#fff" stroke-width="1" stroke-opacity="0.85"/><circle cx="839.7" cy="672.7" r="7.4" fill="#76b7b2" stroke="#fff" stroke-width="1" stroke-opacity="0.85"/><circle cx="754.3" cy="680.6" r="7.4" fill="#76b7b2" stroke="#fff" stroke-width="1" stroke-opacity="0.85"/><circle cx="786.4" cy="688.7" r="7.4" fill="#76b7b2" stroke="#fff" stroke-width="1" stroke-opacity="0.85"/><circle cx="713.1" cy="690.1" r="7.4" fill="#76b7b2" stroke="#fff" stroke-width="1" stroke-opacity="0.85"/><circle cx="853.1" cy="695.4" r="7.4" fill="#76b7b2" stroke="#fff" stroke-width="1" stroke-opacity="0.85"/><circle cx="716.9" cy="743.5" r="7.4" fill="#76b7b2" stroke="#fff" stroke-width="1" stroke-opacity="0.85"/><circle cx="720.9" cy="767.5" r="7.4" fill="#76b7b2" stroke="#fff" stroke-width="1" stroke-opacity="0.85"/><circle cx="898.2" cy="775.7" r="7.4" fill="#76b7b2" stroke="#fff" stroke-width="1" stroke-opacity="0.85"/><circle cx="844.9" cy="791.5" r="7.4" fill="#76b7b2" stroke="#fff" stroke-width="1" stroke-opacity="0.85"/><circle cx="861.1" cy="802.3" r="7.4" fill="#76b7b2" stroke="#fff" stroke-width="1" stroke-opacity="0.85"/><circle cx="733.0" cy="842.0" r="7.4" fill="#76b7b2" stroke="#fff" stroke-width="1" stroke-opacity="0.85"/><circle cx="835.7" cy="837.8" r="7.4" fill="#76b7b2" stroke="#fff" stroke-width="1" stroke-opacity="0.85"/><circle cx="827.3" cy="842.2" r="7.4" fill="#76b7b2" stroke="#fff" stroke-width="1" stroke-opacity="0.85"/><circle cx="864.9" cy="852.8" r="7.4" fill="#76b7b2" stroke="#fff" stroke-width="1" stroke-opacity="0.85"/><circle cx="902.4" cy="843.6" r="7.4" fill="#76b7b2" stroke="#fff" stroke-width="1" stroke-opacity="0.85"/><circle cx="799.5" cy="872.8" r="7.4" fill="#76b7b2" stroke="#fff" stroke-width="1" stroke-opacity="0.85"/><circle cx="890.0" cy="871.8" r="7.4" fill="#76b7b2" stroke="#fff" stroke-width="1" stroke-opacity="0.85"/><circle cx="885.0" cy="896.8" r="7.4" fill="#76b7b2" stroke="#fff" stroke-width="1" stroke-opacity="0.85"/><circle cx="795.6" cy="906.4" r="7.4" fill="#76b7b2" stroke="#fff" stroke-width="1" stroke-opacity="0.85"/><circle cx="812.5" cy="927.8" r="7.4" fill="#76b7b2" stroke="#fff" stroke-width="1" stroke-opacity="0.85"/><circle cx="807.5" cy="927.8" r="7.4" fill="#76b7b2" stroke="#fff" stroke-width="1" stroke-opacity="0.85"/><circle cx="849.1" cy="928.9" r="7.4" fill="#76b7b2" stroke="#fff" stroke-width="1" stroke-opacity="0.85"/><circle cx="906.2" cy="927.8" r="7.4" fill="#76b7b2" stroke="#fff" stroke-width="1" stroke-opacity="0.85"/><circle cx="916.8" cy="936.9" r="7.4" fill="#76b7b2" stroke="#fff" stroke-width="1" stroke-opacity="0.85"/><circle cx="740.9" cy="951.7" r="7.4" fill="#76b7b2" stroke="#fff" stroke-width="1" stroke-opacity="0.85"/><circle cx="790.3" cy="957.0" r="7.4" fill="#76b7b2" stroke="#fff" stroke-width="1" stroke-opacity="0.85"/><circle cx="876.9" cy="964.7" r="7.4" fill="#76b7b2" stroke="#fff" stroke-width="1" stroke-opacity="0.85"/><circle cx="881.1" cy="972.9" r="7.4" fill="#76b7b2" stroke="#fff" stroke-width="1" stroke-opacity="0.85"/><circle cx="913.9" cy="968.9" r="7.4" fill="#76b7b2" stroke="#fff" stroke-width="1" stroke-opacity="0.85"/><circle cx="869.5" cy="980.2" r="7.4" fill="#76b7b2" stroke="#fff" stroke-width="1" stroke-opacity="0.85"/><circle cx="857.0" cy="981.0" r="7.4" fill="#76b7b2" stroke="#fff" stroke-width="1" stroke-opacity="0.85"/><circle cx="910.4" cy="981.0" r="7.4" fill="#76b7b2" stroke="#fff" stroke-width="1" stroke-opacity="0.85"/><circle cx="782.3" cy="981.0" r="7.4" fill="#76b7b2" stroke="#fff" stroke-width="1" stroke-opacity="0.85"/><circle cx="744.8" cy="994.3" r="7.4" fill="#76b7b2" stroke="#fff" stroke-width="1" stroke-opacity="0.85"/><circle cx="873.1" cy="993.0" r="7.4" fill="#76b7b2" stroke="#fff" stroke-width="1" stroke-opacity="0.85"/><circle cx="939.7" cy="236.6" r="7.4" fill="#f28e2b" stroke="#fff" stroke-width="1" stroke-opacity="0.85"/><circle cx="1013.1" cy="614.3" r="7.4" fill="#f28e2b" stroke="#fff" stroke-width="1" stroke-opacity="0.85"/><circle cx="985.1" cy="728.8" r="7.4" fill="#f28e2b" stroke="#fff" stroke-width="1" stroke-opacity="0.85"/><circle cx="1034.4" cy="756.7" r="7.4" fill="#f28e2b" stroke="#fff" stroke-width="1" stroke-opacity="0.85"/><circle cx="1020.9" cy="805.1" r="7.4" fill="#f28e2b" stroke="#fff" stroke-width="1" stroke-opacity="0.85"/><circle cx="1074.5" cy="811.7" r="7.4" fill="#f28e2b" stroke="#fff" stroke-width="1" stroke-opacity="0.85"/><circle cx="1119.8" cy="862.2" r="7.4" fill="#f28e2b" stroke="#fff" stroke-width="1" stroke-opacity="0.85"/><circle cx="989.1" cy="880.8" r="7.4" fill="#f28e2b" stroke="#fff" stroke-width="1" stroke-opacity="0.85"/><circle cx="967.6" cy="891.6" r="7.4" fill="#f28e2b" stroke="#fff" stroke-width="1" stroke-opacity="0.85"/><circle cx="979.8" cy="897.0" r="7.4" fill="#f28e2b" stroke="#fff" stroke-width="1" stroke-opacity="0.85"/><circle cx="1054.5" cy="879.6" r="7.4" fill="#f28e2b" stroke="#fff" stroke-width="1" stroke-opacity="0.85"/><circle cx="1107.7" cy="902.2" r="7.4" fill="#f28e2b" stroke="#fff" stroke-width="1" stroke-opacity="0.85"/><circle cx="922.5" cy="914.2" r="7.4" fill="#f28e2b" stroke="#fff" stroke-width="1" stroke-opacity="0.85"/><circle cx="1025.0" cy="916.7" r="7.4" fill="#f28e2b" stroke="#fff" stroke-width="1" stroke-opacity="0.85"/><circle cx="1070.5" cy="914.2" r="7.4" fill="#f28e2b" stroke="#fff" stroke-width="1" stroke-opacity="0.85"/><circle cx="1005.0" cy="943.5" r="7.4" fill="#f28e2b" stroke="#fff" stroke-width="1" stroke-opacity="0.85"/><circle cx="1058.3" cy="939.5" r="7.4" fill="#f28e2b" stroke="#fff" stroke-width="1" stroke-opacity="0.85"/><circle cx="926.5" cy="959.5" r="7.4" fill="#f28e2b" stroke="#fff" stroke-width="1" stroke-opacity="0.85"/><circle cx="951" cy="957" r="7.4" fill="#f28e2b" stroke="#fff" stroke-width="1" stroke-opacity="0.85"/><circle cx="959.7" cy="958.2" r="7.4" fill="#f28e2b" stroke="#fff" stroke-width="1" stroke-opacity="0.85"/><circle cx="976" cy="963.5" r="7.4" fill="#f28e2b" stroke="#fff" stroke-width="1" stroke-opacity="0.85"/><circle cx="993" cy="959.5" r="7.4" fill="#f28e2b" stroke="#fff" stroke-width="1" stroke-opacity="0.85"/><circle cx="1017.5" cy="962.2" r="7.4" fill="#f28e2b" stroke="#fff" stroke-width="1" stroke-opacity="0.85"/><circle cx="1009" cy="959.5" r="7.4" fill="#f28e2b" stroke="#fff" stroke-width="1" stroke-opacity="0.85"/><circle cx="943.7" cy="970.5" r="7.4" fill="#f28e2b" stroke="#fff" stroke-width="1" stroke-opacity="0.85"/><circle cx="971.8" cy="976.8" r="7.4" fill="#f28e2b" stroke="#fff" stroke-width="1" stroke-opacity="0.85"/><circle cx="1001" cy="981" r="7.4" fill="#f28e2b" stroke="#fff" stroke-width="1" stroke-opacity="0.85"/><circle cx="956.2" cy="986.5" r="7.4" fill="#f28e2b" stroke="#fff" stroke-width="1" stroke-opacity="0.85"/><circle cx="948" cy="981.5" r="7.4" fill="#f28e2b" stroke="#fff" stroke-width="1" stroke-opacity="0.85"/><circle cx="934.5" cy="990.5" r="7.4" fill="#f28e2b" stroke="#fff" stroke-width="1" stroke-opacity="0.85"/><circle cx="1042.5" cy="970.2" r="7.4" fill="#f28e2b" stroke="#fff" stroke-width="1" stroke-opacity="0.85"/><circle cx="1066.5" cy="975.5" r="7.4" fill="#f28e2b" stroke="#fff" stroke-width="1" stroke-opacity="0.85"/><circle cx="1096" cy="978" r="7.4" fill="#f28e2b" stroke="#fff" stroke-width="1" stroke-opacity="0.85"/><circle cx="1083.8" cy="971.5" r="7.4" fill="#f28e2b" stroke="#fff" stroke-width="1" stroke-opacity="0.85"/><circle cx="1046.5" cy="983.5" r="7.4" fill="#f28e2b" stroke="#fff" stroke-width="1" stroke-opacity="0.85"/><circle cx="1029" cy="991.5" r="7.4" fill="#f28e2b" stroke="#fff" stroke-width="1" stroke-opacity="0.85"/><circle cx="1050.5" cy="997" r="7.4" fill="#f28e2b" stroke="#fff" stroke-width="1" stroke-opacity="0.85"/><circle cx="1038.5" cy="998.5" r="7.4" fill="#f28e2b" stroke="#fff" stroke-width="1" stroke-opacity="0.85"/><circle cx="1062.5" cy="1002.5" r="7.4" fill="#f28e2b" stroke="#fff" stroke-width="1" stroke-opacity="0.85"/><circle cx="1099.5" cy="994" r="7.4" fill="#f28e2b" stroke="#fff" stroke-width="1" stroke-opacity="0.85"/><circle cx="1104" cy="989" r="7.4" fill="#f28e2b" stroke="#fff" stroke-width="1" stroke-opacity="0.85"/><circle cx="1092" cy="990" r="7.4" fill="#f28e2b" stroke="#fff" stroke-width="1" stroke-opacity="0.85"/><circle cx="1115.5" cy="986" r="7.4" fill="#f28e2b" stroke="#fff" stroke-width="1" stroke-opacity="0.85"/><circle cx="1087.8" cy="1003" r="7.4" fill="#f28e2b" stroke="#fff" stroke-width="1" stroke-opacity="0.85"/><circle cx="1078.5" cy="1004.5" r="7.4" fill="#f28e2b" stroke="#fff" stroke-width="1" stroke-opacity="0.85"/><circle cx="963.5" cy="1003.5" r="7.4" fill="#f28e2b" stroke="#fff" stroke-width="1" stroke-opacity="0.85"/><circle cx="997" cy="1006" r="7.4" fill="#f28e2b" stroke="#fff" stroke-width="1" stroke-opacity="0.85"/><circle cx="930.5" cy="1009" r="7.4" fill="#f28e2b" stroke="#fff" stroke-width="1" stroke-opacity="0.85"/><circle cx="1111.5" cy="1003.5" r="7.4" fill="#f28e2b" stroke="#fff" stroke-width="1" stroke-opacity="0.85"/><circle cx="1125.1" cy="679.5" r="7.4" fill="#edc948" stroke="#fff" stroke-width="1" stroke-opacity="0.85"/><circle cx="1206.5" cy="933.5" r="7.4" fill="#edc948" stroke="#fff" stroke-width="1" stroke-opacity="0.85"/><circle cx="1165" cy="946" r="7.4" fill="#edc948" stroke="#fff" stroke-width="1" stroke-opacity="0.85"/><circle cx="1194.5" cy="951.5" r="7.4" fill="#edc948" stroke="#fff" stroke-width="1" stroke-opacity="0.85"/><circle cx="1129" cy="950.5" r="7.4" fill="#edc948" stroke="#fff" stroke-width="1" stroke-opacity="0.85"/><circle cx="1141.5" cy="950" r="7.4" fill="#edc948" stroke="#fff" stroke-width="1" stroke-opacity="0.85"/><circle cx="1157" cy="958" r="7.4" fill="#edc948" stroke="#fff" stroke-width="1" stroke-opacity="0.85"/><circle cx="1137" cy="973" r="7.4" fill="#edc948" stroke="#fff" stroke-width="1" stroke-opacity="0.85"/><circle cx="1169" cy="975.5" r="7.4" fill="#edc948" stroke="#fff" stroke-width="1" stroke-opacity="0.85"/><circle cx="1149" cy="991" r="7.4" fill="#edc948" stroke="#fff" stroke-width="1" stroke-opacity="0.85"/><circle cx="1161" cy="986.5" r="7.4" fill="#edc948" stroke="#fff" stroke-width="1" stroke-opacity="0.85"/><circle cx="1182.5" cy="984.5" r="7.4" fill="#edc948" stroke="#fff" stroke-width="1" stroke-opacity="0.85"/><circle cx="1198.5" cy="983.5" r="7.4" fill="#edc948" stroke="#fff" stroke-width="1" stroke-opacity="0.85"/><circle cx="1202.5" cy="991" r="7.4" fill="#edc948" stroke="#fff" stroke-width="1" stroke-opacity="0.85"/><circle cx="1174.5" cy="994.5" r="7.4" fill="#edc948" stroke="#fff" stroke-width="1" stroke-opacity="0.85"/><circle cx="1191" cy="1002" r="7.4" fill="#edc948" stroke="#fff" stroke-width="1" stroke-opacity="0.85"/><circle cx="1187.5" cy="996.5" r="7.4" fill="#edc948" stroke="#fff" stroke-width="1" stroke-opacity="0.85"/><circle cx="1153.5" cy="1002" r="7.4" fill="#edc948" stroke="#fff" stroke-width="1" stroke-opacity="0.85"/><circle cx="1145.5" cy="1005" r="7.4" fill="#edc948" stroke="#fff" stroke-width="1" stroke-opacity="0.85"/><circle cx="1133" cy="1009" r="7.4" fill="#edc948" stroke="#fff" stroke-width="1" stroke-opacity="0.85"/><circle cx="1243.8" cy="982.4" r="7.4" fill="#edc948" stroke="#fff" stroke-width="1" stroke-opacity="0.85"/><circle cx="1259.8" cy="981" r="7.4" fill="#edc948" stroke="#fff" stroke-width="1" stroke-opacity="0.85"/><circle cx="1214" cy="997.5" r="7.4" fill="#edc948" stroke="#fff" stroke-width="1" stroke-opacity="0.85"/><circle cx="1222.6" cy="996.5" r="7.4" fill="#edc948" stroke="#fff" stroke-width="1" stroke-opacity="0.85"/><circle cx="1231.5" cy="994" r="7.4" fill="#edc948" stroke="#fff" stroke-width="1" stroke-opacity="0.85"/><circle cx="1210.5" cy="1006.3" r="7.4" fill="#edc948" stroke="#fff" stroke-width="1" stroke-opacity="0.85"/><circle cx="1220" cy="1010.4" r="7.4" fill="#edc948" stroke="#fff" stroke-width="1" stroke-opacity="0.85"/><circle cx="1229" cy="1009.3" r="7.4" fill="#edc948" stroke="#fff" stroke-width="1" stroke-opacity="0.85"/><circle cx="1256" cy="996.8" r="7.4" fill="#edc948" stroke="#fff" stroke-width="1" stroke-opacity="0.85"/><circle cx="1247.3" cy="1003" r="7.4" fill="#edc948" stroke="#fff" stroke-width="1" stroke-opacity="0.85"/><circle cx="1251.7" cy="1007.6" r="7.4" fill="#edc948" stroke="#fff" stroke-width="1" stroke-opacity="0.85"/><circle cx="1264.2" cy="1006.1" r="7.4" fill="#edc948" stroke="#fff" stroke-width="1" stroke-opacity="0.85"/><circle cx="1273.3" cy="1011.4" r="7.4" fill="#edc948" stroke="#fff" stroke-width="1" stroke-opacity="0.85"/><circle cx="1277" cy="1000.3" r="7.4" fill="#edc948" stroke="#fff" stroke-width="1" stroke-opacity="0.85"/><circle cx="1281.1" cy="1004.7" r="7.4" fill="#edc948" stroke="#fff" stroke-width="1" stroke-opacity="0.85"/><circle cx="1285" cy="991.5" r="7.4" fill="#edc948" stroke="#fff" stroke-width="1" stroke-opacity="0.85"/><circle cx="1291" cy="1009.5" r="7.4" fill="#edc948" stroke="#fff" stroke-width="1" stroke-opacity="0.85"/><circle cx="1297.2" cy="999.1" r="7.4" fill="#edc948" stroke="#fff" stroke-width="1" stroke-opacity="0.85"/><circle cx="1301.3" cy="1009" r="7.4" fill="#edc948" stroke="#fff" stroke-width="1" stroke-opacity="0.85"/><circle cx="1384.1" cy="899.4" r="7.4" fill="#4e79a7" stroke="#fff" stroke-width="1" stroke-opacity="0.85"/><circle cx="1482.8" cy="930.3" r="7.4" fill="#4e79a7" stroke="#fff" stroke-width="1" stroke-opacity="0.85"/><circle cx="1449.3" cy="939.7" r="7.4" fill="#4e79a7" stroke="#fff" stroke-width="1" stroke-opacity="0.85"/><circle cx="1404.1" cy="946.4" r="7.4" fill="#4e79a7" stroke="#fff" stroke-width="1" stroke-opacity="0.85"/><circle cx="1387.8" cy="964.8" r="7.4" fill="#4e79a7" stroke="#fff" stroke-width="1" stroke-opacity="0.85"/><circle cx="1441.1" cy="987.5" r="7.4" fill="#4e79a7" stroke="#fff" stroke-width="1" stroke-opacity="0.85"/><circle cx="1335" cy="977.5" r="7.4" fill="#4e79a7" stroke="#fff" stroke-width="1" stroke-opacity="0.85"/><circle cx="1346.8" cy="977" r="7.4" fill="#4e79a7" stroke="#fff" stroke-width="1" stroke-opacity="0.85"/><circle cx="1330.5" cy="981" r="7.4" fill="#4e79a7" stroke="#fff" stroke-width="1" stroke-opacity="0.85"/><circle cx="1326.6" cy="989.5" r="7.4" fill="#4e79a7" stroke="#fff" stroke-width="1" stroke-opacity="0.85"/><circle cx="1318.3" cy="995.7" r="7.4" fill="#4e79a7" stroke="#fff" stroke-width="1" stroke-opacity="0.85"/><circle cx="1309.2" cy="998.1" r="7.4" fill="#4e79a7" stroke="#fff" stroke-width="1" stroke-opacity="0.85"/><circle cx="1319" cy="1007.6" r="7.4" fill="#4e79a7" stroke="#fff" stroke-width="1" stroke-opacity="0.85"/><circle cx="1322.5" cy="1011.1" r="7.4" fill="#4e79a7" stroke="#fff" stroke-width="1" stroke-opacity="0.85"/><circle cx="1347" cy="1002" r="7.4" fill="#4e79a7" stroke="#fff" stroke-width="1" stroke-opacity="0.85"/><circle cx="1358.5" cy="1000" r="7.4" fill="#4e79a7" stroke="#fff" stroke-width="1" stroke-opacity="0.85"/><circle cx="1339" cy="1007" r="7.4" fill="#4e79a7" stroke="#fff" stroke-width="1" stroke-opacity="0.85"/><circle cx="1342.5" cy="1007" r="7.4" fill="#4e79a7" stroke="#fff" stroke-width="1" stroke-opacity="0.85"/><circle cx="1355" cy="1011" r="7.4" fill="#4e79a7" stroke="#fff" stroke-width="1" stroke-opacity="0.85"/><circle cx="1367.5" cy="1007" r="7.4" fill="#4e79a7" stroke="#fff" stroke-width="1" stroke-opacity="0.85"/><circle cx="1361.2" cy="999.8" r="7.4" fill="#4e79a7" stroke="#fff" stroke-width="1" stroke-opacity="0.85"/><circle cx="1365.9" cy="1008.1" r="7.4" fill="#4e79a7" stroke="#fff" stroke-width="1" stroke-opacity="0.85"/><circle cx="1371.7" cy="1011" r="7.4" fill="#4e79a7" stroke="#fff" stroke-width="1" stroke-opacity="0.85"/><circle cx="1376.4" cy="1003.4" r="7.4" fill="#4e79a7" stroke="#fff" stroke-width="1" stroke-opacity="0.85"/><circle cx="1380" cy="1006.3" r="7.4" fill="#4e79a7" stroke="#fff" stroke-width="1" stroke-opacity="0.85"/><circle cx="1392.9" cy="1003.4" r="7.4" fill="#4e79a7" stroke="#fff" stroke-width="1" stroke-opacity="0.85"/><circle cx="1398.2" cy="1008.1" r="7.4" fill="#4e79a7" stroke="#fff" stroke-width="1" stroke-opacity="0.85"/><circle cx="1414" cy="1000" r="7.4" fill="#4e79a7" stroke="#fff" stroke-width="1" stroke-opacity="0.85"/><circle cx="1409.3" cy="1009.2" r="7.4" fill="#4e79a7" stroke="#fff" stroke-width="1" stroke-opacity="0.85"/><circle cx="1421.1" cy="1001.6" r="7.4" fill="#4e79a7" stroke="#fff" stroke-width="1" stroke-opacity="0.85"/><circle cx="1425.2" cy="1010.4" r="7.4" fill="#4e79a7" stroke="#fff" stroke-width="1" stroke-opacity="0.85"/><circle cx="1429.3" cy="1006.3" r="7.4" fill="#4e79a7" stroke="#fff" stroke-width="1" stroke-opacity="0.85"/><circle cx="1435.2" cy="1004.5" r="7.4" fill="#4e79a7" stroke="#fff" stroke-width="1" stroke-opacity="0.85"/><circle cx="1445.2" cy="1008.7" r="7.4" fill="#4e79a7" stroke="#fff" stroke-width="1" stroke-opacity="0.85"/><circle cx="1454.6" cy="1006.9" r="7.4" fill="#4e79a7" stroke="#fff" stroke-width="1" stroke-opacity="0.85"/><circle cx="1465.7" cy="998.7" r="7.4" fill="#4e79a7" stroke="#fff" stroke-width="1" stroke-opacity="0.85"/><circle cx="1474.6" cy="992.8" r="7.4" fill="#4e79a7" stroke="#fff" stroke-width="1" stroke-opacity="0.85"/><circle cx="1462.2" cy="1008.7" r="7.4" fill="#4e79a7" stroke="#fff" stroke-width="1" stroke-opacity="0.85"/><circle cx="1470.4" cy="1010.4" r="7.4" fill="#4e79a7" stroke="#fff" stroke-width="1" stroke-opacity="0.85"/><circle cx="1478.7" cy="1008.7" r="7.4" fill="#4e79a7" stroke="#fff" stroke-width="1" stroke-opacity="0.85"/><circle cx="1486.9" cy="1006.3" r="7.4" fill="#4e79a7" stroke="#fff" stroke-width="1" stroke-opacity="0.85"/><path d="M905 190V1057" stroke="#cdcdcd" stroke-width="2.6"/><path d="M1093 190V1057" stroke="#cdcdcd" stroke-width="2.6"/><path d="M1294.5 190V1057" stroke="#cdcdcd" stroke-width="2.6"/><path d="M712.8 526.2 L713.3 536.3 L713.8 545.4 L714.3 553.6 L714.8 561.2 L715.3 568.2 L715.8 574.8 L716.3 580.9 L716.8 586.6 L717.3 592.0 L717.8 597.1 L718.3 601.9 L718.8 606.5 L719.3 610.9 L719.8 615.1 L720.3 619.1 L720.8 622.9 L721.3 626.6 L721.8 630.2 L722.3 633.6 L722.8 636.9 L723.3 640.1 L723.8 643.2 L724.3 646.1 L724.8 649.0 L725.3 651.8 L725.8 654.5 L726.3 657.2 L726.8 659.8 L727.3 662.3 L727.8 664.7 L728.3 667.1 L728.8 669.4 L729.3 671.7 L729.8 673.9 L730.3 676.0 L730.8 678.1 L731.3 680.2 L731.8 682.2 L732.3 684.2 L732.8 686.1 L733.3 688.0 L733.8 689.9 L734.3 691.7 L734.8 693.5 L735.3 695.2 L735.8 696.9 L736.3 698.6 L736.8 700.3 L737.3 701.9 L737.8 703.5 L738.3 705.1 L738.8 706.6 L739.3 708.1 L739.8 709.6 L740.3 711.1 L740.8 712.6 L741.3 714.0 L741.8 715.4 L742.3 716.8 L742.8 718.2 L743.3 719.5 L743.8 720.8 L744.3 722.1 L744.8 723.4 L745.3 724.7 L745.8 726.0 L746.3 727.2 L746.8 728.4 L747.3 729.6 L747.8 730.8 L748.3 732.0 L748.8 733.2 L749.3 734.3 L749.8 735.4 L750.3 736.6 L750.8 737.7 L751.3 738.8 L751.8 739.8 L752.3 740.9 L752.8 742.0 L753.3 743.0 L753.8 744.0 L754.3 745.1 L754.8 746.1 L755.3 747.1 L755.8 748.1 L756.3 749.1 L756.8 750.0 L757.3 751.0 L757.8 751.9 L758.3 752.9 L758.8 753.8 L759.3 754.7 L759.8 755.6 L760.3 756.5 L763.3 761.8 L766.3 766.7 L769.3 771.5 L772.3 775.9 L775.3 780.2 L778.3 784.3 L781.3 788.2 L784.3 792.0 L787.3 795.6 L790.3 799.1 L793.3 802.5 L796.3 805.7 L799.3 808.8 L802.3 811.9 L805.3 814.8 L808.3 817.6 L811.3 820.4 L814.3 823.1 L817.3 825.7 L820.3 828.2 L823.3 830.7 L826.3 833.1 L829.3 835.5 L832.3 837.7 L835.3 840.0 L838.3 842.2 L841.3 844.3 L844.3 846.4 L847.3 848.4 L850.3 850.4 L853.3 852.4 L856.3 854.3 L859.3 856.1 L862.3 858.0 L865.3 859.8 L868.3 861.5 L871.3 863.3 L874.3 865.0 L877.3 866.7 L880.3 868.3 L883.3 869.9 L886.3 871.5 L889.3 873.1 L892.3 874.6 L895.3 876.1 L898.3 877.6 L901.3 879.1 L904.3 880.5 L907.3 881.9 L910.3 883.3 L913.3 884.7 L916.3 886.0 L919.3 887.4 L922.3 888.7 L925.3 890.0 L928.3 891.3 L931.3 892.5 L934.3 893.8 L937.3 895.0 L940.3 896.2 L943.3 897.4 L946.3 898.6 L949.3 899.8 L952.3 900.9 L955.3 902.1 L958.3 903.2 L961.3 904.3 L964.3 905.4 L967.3 906.5 L970.3 907.6 L973.3 908.7 L976.3 909.7 L979.3 910.7 L982.3 911.8 L985.3 912.8 L988.3 913.8 L991.3 914.8 L994.3 915.8 L997.3 916.7 L1000.3 917.7 L1003.3 918.7 L1006.3 919.6 L1009.3 920.5 L1012.3 921.5 L1015.3 922.4 L1018.3 923.3 L1021.3 924.2 L1024.3 925.1 L1027.3 926.0 L1030.3 926.8 L1033.3 927.7 L1036.3 928.6 L1039.3 929.4 L1042.3 930.3 L1045.3 931.1 L1048.3 931.9 L1051.3 932.7 L1054.3 933.6 L1057.3 934.4 L1060.3 935.2 L1063.3 935.9 L1066.3 936.7 L1069.3 937.5 L1072.3 938.3 L1075.3 939.1 L1078.3 939.8 L1081.3 940.6 L1084.3 941.3 L1087.3 942.1 L1090.3 942.8 L1093.3 943.5 L1096.3 944.2 L1099.3 945.0 L1102.3 945.7 L1105.3 946.4 L1108.3 947.1 L1111.3 947.8 L1114.3 948.5 L1117.3 949.2 L1120.3 949.8 L1123.3 950.5 L1126.3 951.2 L1129.3 951.9 L1132.3 952.5 L1135.3 953.2 L1138.3 953.8 L1141.3 954.5 L1144.3 955.1 L1147.3 955.8 L1150.3 956.4 L1153.3 957.0 L1156.3 957.7 L1159.3 958.3 L1162.3 958.9 L1165.3 959.5 L1168.3 960.1 L1171.3 960.7 L1174.3 961.3 L1177.3 961.9 L1180.3 962.5 L1183.3 963.1 L1186.3 963.7 L1189.3 964.3 L1192.3 964.9 L1195.3 965.5 L1198.3 966.0 L1201.3 966.6 L1204.3 967.2 L1207.3 967.7 L1210.3 968.3 L1213.3 968.8 L1216.3 969.4 L1219.3 969.9 L1222.3 970.5 L1225.3 971.0 L1228.3 971.6 L1231.3 972.1 L1234.3 972.6 L1237.3 973.2 L1240.3 973.7 L1243.3 974.2 L1246.3 974.8 L1249.3 975.3 L1252.3 975.8 L1255.3 976.3 L1258.3 976.8 L1261.3 977.3 L1264.3 977.8 L1267.3 978.3 L1270.3 978.8 L1273.3 979.3 L1276.3 979.8 L1279.3 980.3 L1282.3 980.8 L1285.3 981.3 L1288.3 981.8 L1291.3 982.3 L1294.3 982.7 L1297.3 983.2 L1300.3 983.7 L1303.3 984.2 L1306.3 984.6 L1309.3 985.1 L1312.3 985.6 L1315.3 986.0 L1318.3 986.5 L1321.3 986.9 L1324.3 987.4 L1327.3 987.8 L1330.3 988.3 L1333.3 988.7 L1336.3 989.2 L1339.3 989.6 L1342.3 990.1 L1345.3 990.5 L1348.3 991.0 L1351.3 991.4 L1354.3 991.8 L1357.3 992.3 L1360.3 992.7 L1363.3 993.1 L1366.3 993.5 L1369.3 994.0 L1372.3 994.4 L1375.3 994.8 L1378.3 995.2 L1381.3 995.7 L1384.3 996.1 L1387.3 996.5 L1390.3 996.9 L1393.3 997.3 L1396.3 997.7 L1399.3 998.1 L1402.3 998.5 L1405.3 998.9 L1408.3 999.3 L1411.3 999.7 L1414.3 1000.1 L1417.3 1000.5 L1420.3 1000.9 L1423.3 1001.3 L1426.3 1001.7 L1429.3 1002.1 L1432.3 1002.5 L1435.3 1002.9 L1438.3 1003.2 L1441.3 1003.6 L1444.3 1004.0 L1447.3 1004.4 L1450.3 1004.8 L1453.3 1005.1 L1456.3 1005.5 L1459.3 1005.9 L1462.3 1006.3 L1465.3 1006.6 L1468.3 1007.0 L1471.3 1007.4 L1474.3 1007.7 L1477.3 1008.1 L1480.3 1008.5 L1483.3 1008.8 L1486.3 1009.2 L1489.3 1009.5 L1492.3 1009.9 L1495.3 1010.3 L1498.3 1010.6 L1501.3 1011.0 L1504.3 1011.3 L1507.3 1011.7 L1510.3 1012.0 L1513.3 1012.4 L1516.3 1012.7 L1519.3 1013.1 L1522.3 1013.4 L1525.3 1013.7 L1528.3 1014.1 L1531.3 1014.4" stroke="#7f7f7f" stroke-opacity="0.9" stroke-width="2.4" fill="none" stroke-dasharray="12 4.5"/></svg>
<div style="position:absolute;left:57.50px;width:600px;text-align:right;top:1004.03px;font-size:16.5px;line-height:16.5px;font-weight:400;color:#666;white-space:nowrap;">$0K</div>
<div style="position:absolute;left:57.50px;width:600px;text-align:right;top:911.41px;font-size:16.5px;line-height:16.5px;font-weight:400;color:#666;white-space:nowrap;">$10K</div>
<div style="position:absolute;left:57.50px;width:600px;text-align:right;top:818.78px;font-size:16.5px;line-height:16.5px;font-weight:400;color:#666;white-space:nowrap;">$20K</div>
<div style="position:absolute;left:57.50px;width:600px;text-align:right;top:726.16px;font-size:16.5px;line-height:16.5px;font-weight:400;color:#666;white-space:nowrap;">$30K</div>
<div style="position:absolute;left:57.50px;width:600px;text-align:right;top:633.53px;font-size:16.5px;line-height:16.5px;font-weight:400;color:#666;white-space:nowrap;">$40K</div>
<div style="position:absolute;left:57.50px;width:600px;text-align:right;top:540.91px;font-size:16.5px;line-height:16.5px;font-weight:400;color:#666;white-space:nowrap;">$50K</div>
<div style="position:absolute;left:57.50px;width:600px;text-align:right;top:448.28px;font-size:16.5px;line-height:16.5px;font-weight:400;color:#666;white-space:nowrap;">$60K</div>
<div style="position:absolute;left:57.50px;width:600px;text-align:right;top:355.66px;font-size:16.5px;line-height:16.5px;font-weight:400;color:#666;white-space:nowrap;">$70K</div>
<div style="position:absolute;left:57.50px;width:600px;text-align:right;top:263.03px;font-size:16.5px;line-height:16.5px;font-weight:400;color:#666;white-space:nowrap;">$80K</div>
<div style="position:absolute;left:409.00px;width:600px;text-align:center;top:1070.63px;font-size:16.5px;line-height:16.5px;font-weight:400;color:#666;white-space:nowrap;">0</div>
<div style="position:absolute;left:491.34px;width:600px;text-align:center;top:1070.63px;font-size:16.5px;line-height:16.5px;font-weight:400;color:#666;white-space:nowrap;">20</div>
<div style="position:absolute;left:573.68px;width:600px;text-align:center;top:1070.63px;font-size:16.5px;line-height:16.5px;font-weight:400;color:#666;white-space:nowrap;">40</div>
<div style="position:absolute;left:656.02px;width:600px;text-align:center;top:1070.63px;font-size:16.5px;line-height:16.5px;font-weight:400;color:#666;white-space:nowrap;">60</div>
<div style="position:absolute;left:738.36px;width:600px;text-align:center;top:1070.63px;font-size:16.5px;line-height:16.5px;font-weight:400;color:#666;white-space:nowrap;">80</div>
<div style="position:absolute;left:820.70px;width:600px;text-align:center;top:1070.63px;font-size:16.5px;line-height:16.5px;font-weight:400;color:#666;white-space:nowrap;">100</div>
<div style="position:absolute;left:903.04px;width:600px;text-align:center;top:1070.63px;font-size:16.5px;line-height:16.5px;font-weight:400;color:#666;white-space:nowrap;">120</div>
<div style="position:absolute;left:985.38px;width:600px;text-align:center;top:1070.63px;font-size:16.5px;line-height:16.5px;font-weight:400;color:#666;white-space:nowrap;">140</div>
<div style="position:absolute;left:1067.72px;width:600px;text-align:center;top:1070.63px;font-size:16.5px;line-height:16.5px;font-weight:400;color:#666;white-space:nowrap;">160</div>
<div style="position:absolute;left:1150.06px;width:600px;text-align:center;top:1070.63px;font-size:16.5px;line-height:16.5px;font-weight:400;color:#666;white-space:nowrap;">180</div>
<div style="position:absolute;left:930.00px;width:600px;text-align:right;top:1070.63px;font-size:16.5px;line-height:16.5px;font-weight:400;color:#666;white-space:nowrap;">200</div>
<div style="position:absolute;left:799.20px;width:600px;text-align:center;top:1102.89px;font-size:16.9px;line-height:16.9px;font-weight:400;color:#3a3a3a;white-space:nowrap;-webkit-text-stroke:0.5px #3a3a3a">Ease of biz index (1=most business-friendly regulations)</div>
<div style="position:absolute;left:487px;top:612px;width:200px;height:20px;text-align:center;transform:rotate(-90deg);font-size:15.85px;line-height:20px;font-weight:400;color:#3a3a3a;-webkit-text-stroke:0.5px #3a3a3a;white-space:nowrap">GDP per Capita</div>
<div style="position:absolute;left:924.3px;top:304.8px;transform-origin:0 0;transform:rotate(-90deg);"><div style="position:absolute;left:0;top:-14.4px;font-size:17px;line-height:17px;color:#858585;white-space:nowrap;background:#fff;padding:0 1px 0 0">Lower Quartile</div></div>
<div style="position:absolute;left:1112.6px;top:249px;transform-origin:0 0;transform:rotate(-90deg);"><div style="position:absolute;left:0;top:-14.4px;font-size:17px;line-height:17px;color:#858585;white-space:nowrap;background:#fff;padding:0 1px 0 0">Median</div></div>
<div style="position:absolute;left:1313.3px;top:304.5px;transform-origin:0 0;transform:rotate(-90deg);"><div style="position:absolute;left:0;top:-14.4px;font-size:17px;line-height:17px;color:#858585;white-space:nowrap;background:#fff;padding:0 1px 0 0">Upper Quartile</div></div>
<div style="position:absolute;left:1555.3px;top:177.5px;width:391.20000000000005px;height:75.80000000000001px;background:#f9f9f9;border:1px solid #d9d9d9;box-sizing:border-box"></div>
<div style="position:absolute;left:1564.80px;top:189.66px;font-size:16.7px;line-height:16.7px;font-weight:400;color:#383838;white-space:nowrap;">Highlight Country/Region</div>
<div style="position:absolute;left:1560.6px;top:221.4px;width:380.20000000000005px;height:25.400000000000006px;background:#fff;border:1px solid #cfcfcf;border-radius:2px;box-sizing:border-box"></div>
<div style="position:absolute;left:1572.60px;top:226.89px;font-size:13.6px;line-height:13.6px;font-weight:400;color:#909090;white-space:nowrap;">Highlight Country/Region</div>
<svg style="position:absolute;left:1921px;top:226px;" width="14" height="14" viewBox="0 0 14 14"><circle cx="8" cy="5.6" r="3.6" stroke="#555" stroke-width="1.3" fill="none"/><path d="M5.5 8.3L1.8 12" stroke="#555" stroke-width="1.5"/></svg>
<div style="position:absolute;left:1555.3px;top:262.7px;width:391.20000000000005px;height:147.90000000000003px;background:#fff;border:1px solid #d9d9d9;box-sizing:border-box"></div>
<div style="position:absolute;left:1556.3px;top:263.7px;width:389.20000000000005px;height:38.19999999999999px;background:#f9f9f9"></div>
<div style="position:absolute;left:1564.80px;top:275.86px;font-size:16.7px;line-height:16.7px;font-weight:400;color:#383838;white-space:nowrap;">Ease of Business</div>
<div style="position:absolute;left:1562px;top:308.2px;width:14.799999999999955px;height:14.600000000000023px;background:#76b7b2"></div>
<div style="position:absolute;left:1585.80px;top:308.78px;font-size:16.8px;line-height:16.8px;font-weight:400;color:#383838;white-space:nowrap;">Very Friendly</div>
<div style="position:absolute;left:1562px;top:334.95px;width:14.799999999999955px;height:14.600000000000023px;background:#f28e2b"></div>
<div style="position:absolute;left:1585.80px;top:335.53px;font-size:16.8px;line-height:16.8px;font-weight:400;color:#383838;white-space:nowrap;">Friendly</div>
<div style="position:absolute;left:1562px;top:361.7px;width:14.799999999999955px;height:14.600000000000023px;background:#edc948"></div>
<div style="position:absolute;left:1585.80px;top:362.28px;font-size:16.8px;line-height:16.8px;font-weight:400;color:#383838;white-space:nowrap;">Moderate</div>
<div style="position:absolute;left:1562px;top:388.45px;width:14.799999999999955px;height:14.600000000000023px;background:#4e79a7"></div>
<div style="position:absolute;left:1585.80px;top:389.03px;font-size:16.8px;line-height:16.8px;font-weight:400;color:#383838;white-space:nowrap;">Low</div>
<div style="position:absolute;left:34px;top:1165px;width:1920.6px;height:40.799999999999955px;background:#e6e6e6;border-top:1px solid #d9d9d9;box-sizing:border-box"></div>
<div style="position:absolute;left:967.8px;top:1165px;width:239.70000000000005px;height:40.799999999999955px;background:#fafafa;border-top:1px solid #e2e2e2;box-sizing:border-box"></div>
<div style="position:absolute;left:208.3px;top:1166px;width:1.1999999999999886px;height:39px;background:#d4d4d4"></div>
<div style="position:absolute;left:308.8px;top:1166px;width:1.1999999999999886px;height:39px;background:#d4d4d4"></div>
<div style="position:absolute;left:456.8px;top:1166px;width:1.1999999999999886px;height:39px;background:#d4d4d4"></div>
<div style="position:absolute;left:563.2px;top:1166px;width:1.2000000000000455px;height:39px;background:#d4d4d4"></div>
<div style="position:absolute;left:667.5px;top:1166px;width:1.2000000000000455px;height:39px;background:#d4d4d4"></div>
<div style="position:absolute;left:755.3px;top:1166px;width:1.2000000000000455px;height:39px;background:#d4d4d4"></div>
<div style="position:absolute;left:858.2px;top:1166px;width:1.2000000000000455px;height:39px;background:#d4d4d4"></div>
<div style="position:absolute;left:967.8px;top:1166px;width:1.2000000000000455px;height:39px;background:#d4d4d4"></div>
<div style="position:absolute;left:1207.5px;top:1166px;width:1.2000000000000455px;height:39px;background:#d4d4d4"></div>
<div style="position:absolute;left:1379.5px;top:1166px;width:1.2000000000000455px;height:39px;background:#d4d4d4"></div>
<div style="position:absolute;left:1421.4px;top:1166px;width:1.2000000000000455px;height:39px;background:#d4d4d4"></div>
<div style="position:absolute;left:1464px;top:1166px;width:1.2000000000000455px;height:39px;background:#d4d4d4"></div>
<div style="position:absolute;left:1506.5px;top:1166px;width:1.2000000000000455px;height:39px;background:#d4d4d4"></div>
<div style="position:absolute;left:34px;top:1204.8px;width:1920.6px;height:1.0px;background:#d6d6d6"></div>
<div style="position:absolute;left:66.70px;top:1177.80px;font-size:16.3px;line-height:16.3px;font-weight:400;color:#555;white-space:nowrap;">Data Source</div>
<div style="position:absolute;left:217.00px;top:1177.80px;font-size:16.3px;line-height:16.3px;font-weight:400;color:#555;white-space:nowrap;">Population</div>
<div style="position:absolute;left:316.80px;top:1177.80px;font-size:16.3px;line-height:16.3px;font-weight:400;color:#555;white-space:nowrap;">Health Indicators</div>
<div style="position:absolute;left:465.20px;top:1177.80px;font-size:16.3px;line-height:16.3px;font-weight:400;color:#555;white-space:nowrap;">Care Spend</div>
<div style="position:absolute;left:572.30px;top:1177.80px;font-size:16.3px;line-height:16.3px;font-weight:400;color:#555;white-space:nowrap;">Technology</div>
<div style="position:absolute;left:675.60px;top:1177.80px;font-size:16.3px;line-height:16.3px;font-weight:400;color:#555;white-space:nowrap;">Economy</div>
<div style="position:absolute;left:788.20px;top:1177.80px;font-size:16.3px;line-height:16.3px;font-weight:400;color:#555;white-space:nowrap;">Tourism</div>
<div style="position:absolute;left:890.80px;top:1177.80px;font-size:16.3px;line-height:16.3px;font-weight:400;color:#555;white-space:nowrap;">Business</div>
<div style="position:absolute;left:1240.00px;top:1177.80px;font-size:16.3px;line-height:16.3px;font-weight:400;color:#555;white-space:nowrap;">Global Indicators</div>
<div style="position:absolute;left:976.50px;top:1178.03px;font-size:15.8px;line-height:15.8px;font-weight:700;color:#383838;white-space:nowrap;">Ease of Biz Correlation Sheet</div>
<svg style="position:absolute;left:45px;top:1176px;" width="16" height="18" viewBox="0 0 16 18"><path d="M2.6 4V13.6C2.6 15.4 4.5 16.3 8 16.3S13.4 15.4 13.4 13.6V4M2.6 4C2.6 2.4 4.5 1.5 8 1.5S13.4 2.4 13.4 4 11.5 6.5 8 6.5 2.6 5.6 2.6 4Z" stroke="#666" stroke-width="1.3" fill="none"/></svg>
<svg style="position:absolute;left:766px;top:1177px;" width="17" height="17" viewBox="0 0 17 17"><rect x="1.5" y="1.5" width="14" height="14" stroke="#666" stroke-width="1.3" fill="none"/><path d="M8.5 1.5V15.5M1.5 8.5H15.5" stroke="#666" stroke-width="1.3"/></svg>
<svg style="position:absolute;left:869px;top:1177px;" width="17" height="17" viewBox="0 0 17 17"><rect x="1.5" y="1.5" width="14" height="14" stroke="#666" stroke-width="1.3" fill="none"/><path d="M8.5 1.5V15.5M1.5 8.5H15.5" stroke="#666" stroke-width="1.3"/></svg>
<svg style="position:absolute;left:1218px;top:1176px;" width="17" height="18" viewBox="0 0 17 18"><path d="M1.5 3L5.8 1.5V14.5L1.5 16ZM5.8 1.5L11 3.2V16.2L5.8 14.5M11 3.2L15.5 1.5V14.5L11 16.2" stroke="#666" stroke-width="1.3" fill="none" stroke-linejoin="round"/></svg>
<svg style="position:absolute;left:1390px;top:1175px;" width="24" height="24" viewBox="0 0 24 24"><rect x="1.5" y="2" width="14" height="13.5" stroke="#666" stroke-width="1.3" fill="none"/><path d="M5 12V9M8.3 12V6M11.6 12V8" stroke="#666" stroke-width="1.5"/><path d="M13.0 17.5H22.0M17.5 13.0V22.0" stroke="#666" stroke-width="2.4"/></svg>
<svg style="position:absolute;left:1432px;top:1175px;" width="24" height="24" viewBox="0 0 24 24"><rect x="1.5" y="2" width="14" height="13.5" stroke="#666" stroke-width="1.3" fill="none"/><path d="M8.5 2V15.5M1.5 8.7H15.5" stroke="#666" stroke-width="1.3"/><path d="M13.0 17.5H22.0M17.5 13.0V22.0" stroke="#666" stroke-width="2.4"/></svg>
<svg style="position:absolute;left:1476px;top:1175px;" width="24" height="24" viewBox="0 0 24 24"><path d="M1.5 3L5.5 1.5V14L1.5 15.5ZM5.5 1.5L10.5 3V15.5L5.5 14M10.5 3L14.5 1.5V10" stroke="#666" stroke-width="1.3" fill="none" stroke-linejoin="round"/><path d="M13.0 17.5H22.0M17.5 13.0V22.0" stroke="#666" stroke-width="2.4"/></svg>
<div style="position:absolute;left:34px;top:1205.8px;width:1920.6px;height:27.5px;background:#ebebeb"></div>
<div style="position:absolute;left:51.20px;top:1213.05px;font-size:14px;line-height:14px;font-weight:400;color:#383838;white-space:nowrap;">183 marks</div>
<div style="position:absolute;left:139.20px;top:1213.05px;font-size:14px;line-height:14px;font-weight:400;color:#383838;white-space:nowrap;">1 row by 1 column</div>
<div style="position:absolute;left:271.30px;top:1213.43px;font-size:13.55px;line-height:13.55px;font-weight:400;color:#383838;white-space:nowrap;">SUM of AVG(Ease of Business): 17,423</div>
<div style="position:absolute;left:1337.7px;top:1206px;width:1.0px;height:27px;background:#d0d0d0"></div>
<div style="position:absolute;left:1507px;top:1206px;width:1px;height:27px;background:#d0d0d0"></div>
<div style="position:absolute;left:1543.3px;top:1206px;width:1.0px;height:27px;background:#d0d0d0"></div>
<div style="position:absolute;left:1579.5px;top:1206px;width:1.0px;height:27px;background:#d0d0d0"></div>
<div style="position:absolute;left:1642px;top:1206px;width:1px;height:27px;background:#d0d0d0"></div>
<div style="position:absolute;left:1757.5px;top:1206px;width:1.0px;height:27px;background:#d0d0d0"></div>
<div style="position:absolute;left:1853px;top:1206px;width:1px;height:27px;background:#d0d0d0"></div>
<div style="position:absolute;left:1673.40px;top:1213.35px;font-size:14px;line-height:14px;font-weight:400;color:#383838;white-space:nowrap;">FF: +0 -0</div>
<svg style="position:absolute;left:1765px;top:1212px;" width="82" height="14" viewBox="0 0 82 14"><path d="M4 2V11.5" stroke="#b0b0b0" stroke-width="1.4"/><path d="M12 2.3L6 6.8L12 11.3Z" fill="#b0b0b0"/><path d="M33 2.3L27.5 6.8L33 11.3Z" fill="#b0b0b0"/><path d="M49 2.3L54.5 6.8L49 11.3Z" fill="#b0b0b0"/><path d="M68 2.3L74 6.8L68 11.3Z" fill="#b0b0b0"/><path d="M76 2V11.5" stroke="#b0b0b0" stroke-width="1.4"/></svg>
<svg style="position:absolute;left:1863px;top:1211px;" width="18" height="18" viewBox="0 0 18 18"><rect x="1.0" y="1.0" width="4" height="4" fill="#aaa"/><rect x="1.0" y="6.6" width="4" height="4" fill="#aaa"/><rect x="1.0" y="12.2" width="4" height="4" fill="#aaa"/><rect x="6.6" y="1.0" width="4" height="4" fill="#aaa"/><rect x="6.6" y="6.6" width="4" height="4" fill="#aaa"/><rect x="6.6" y="12.2" width="4" height="4" fill="#aaa"/><rect x="12.2" y="1.0" width="4" height="4" fill="#aaa"/><rect x="12.2" y="6.6" width="4" height="4" fill="#aaa"/><rect x="12.2" y="12.2" width="4" height="4" fill="#aaa"/></svg>
<svg style="position:absolute;left:1891px;top:1211px;" width="18" height="18" viewBox="0 0 18 18"><rect x="1" y="1" width="15.2" height="9.6" fill="#aaa"/><rect x="1.0" y="12.2" width="4" height="4" fill="#aaa"/><rect x="6.6" y="12.2" width="4" height="4" fill="#aaa"/><rect x="12.2" y="12.2" width="4" height="4" fill="#aaa"/></svg>
<svg style="position:absolute;left:1920px;top:1211px;" width="18" height="18" viewBox="0 0 18 18"><rect x="1" y="1" width="15.2" height="15.2" fill="#555"/></svg>
</div>
</body></html>
